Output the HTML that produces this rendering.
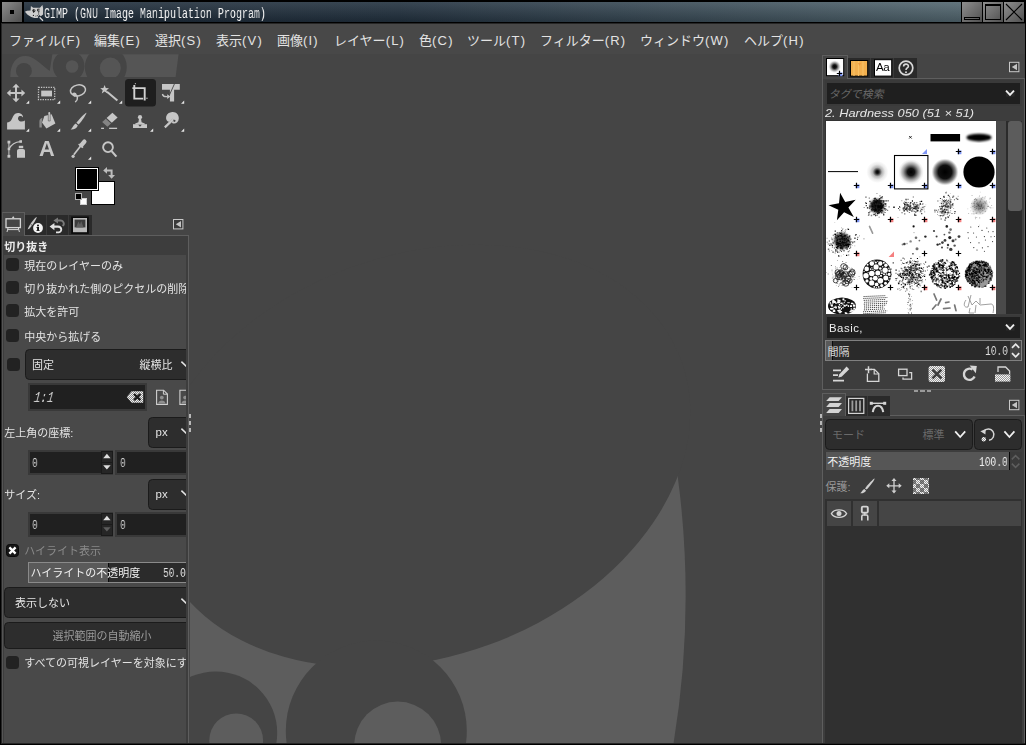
<!DOCTYPE html><html lang="ja"><head><meta charset="utf-8"><title>GIMP (GNU Image Manipulation Program)</title><style>
html,body{margin:0;padding:0;background:#000;}
#r{position:relative;width:1026px;height:745px;overflow:hidden;background:#000;font-family:"Liberation Sans",sans-serif;color:#e3e3e3;}
#r div,#r svg,#r span{position:absolute;box-sizing:border-box;}
#r svg{overflow:hidden;}
#r svg text{font-family:"Liberation Sans","Noto Sans CJK JP",sans-serif;}
.m,.s{will-change:transform;}
.m{font-family:"Liberation Mono",monospace;white-space:pre;}
.s{font-family:"Liberation Sans",sans-serif;white-space:pre;}
</style></head><body><div id="r"><div style="left:2px;top:2px;width:20px;height:20px;background:linear-gradient(135deg,#8c8c8c,#4e4e4e);"><div style="left:8px;top:8px;width:4px;height:4px;background:#000;"></div></div>
<div style="left:24px;top:2px;width:937px;height:20px;background:linear-gradient(180deg,rgba(255,255,255,.10),rgba(0,0,0,.18)),linear-gradient(90deg,#1f2d3a 0%,#22313f 40%,#52666f 100%);"></div>
<span class="m" style="left:44.2px;top:5px;font-size:15.2px;line-height:18px;color:#f2f2f2;transform-origin:0 0;transform:scaleX(.658)">GIMP (GNU Image Manipulation Program)</span>
<div style="left:962px;top:2px;width:20px;height:20px;background:linear-gradient(135deg,#8e8e8e,#505050);"></div>
<div style="left:983px;top:2px;width:20px;height:20px;background:linear-gradient(135deg,#8e8e8e,#505050);"></div>
<div style="left:1004px;top:2px;width:20px;height:20px;background:linear-gradient(135deg,#8e8e8e,#505050);"></div>
<svg style="left:960px;top:0px" width="66" height="24" viewBox="960 0 66 24"><rect x="964.5" y="17.5" width="15" height="2" fill="none" stroke="#000" stroke-width="1"/><rect x="985.5" y="5" width="15" height="14.5" fill="none" stroke="#000" stroke-width="1"/><rect x="985" y="4" width="16" height="2" fill="#000"/><path d="M1006 4L1022 20M1022 4L1006 20" stroke="#000" stroke-width="1.1" fill="none"/></svg>
<svg style="left:24px;top:2px" width="22" height="20" viewBox="24 2 22 20"><path d="M24.9 11.8L27 10.7L30.6 10.6L30.9 6L33.2 7.7L40 7.7L42.4 5L43.1 8L43.1 14.6L40.4 16.6L38.2 17.9L34.3 18.1L31.2 17L27.6 14.7Z" fill="#cdcdcd"/><path d="M38.6 16L43.2 20.9" stroke="#1a2430" stroke-width="2.6"/><path d="M39.6 17.2L43 20.7" stroke="#d8d8d8" stroke-width="1.3"/><circle cx="33.9" cy="10.4" r="1.5" fill="#1c1c1c"/><circle cx="34.3" cy="10" r="0.55" fill="#ddd"/><path d="M33.6 11.6L33.6 12.8" stroke="#1c1c1c" stroke-width="1.1"/><path d="M39.6 9.2L37.6 9.2L37.6 11L39.6 11" stroke="#1c1c1c" stroke-width="0.9" fill="none"/><path d="M38.7 11.4L38.7 14.4L37.6 15.6L35.4 16.2" stroke="#1c1c1c" stroke-width="0.8" fill="none" stroke-dasharray="1.4 0.6"/><circle cx="33.4" cy="15.4" r="0.6" fill="#1c1c1c"/></svg>
<div style="left:1px;top:23px;width:1024px;height:721px;background:#262626;"></div>
<div style="left:2px;top:24px;width:1023px;height:719px;background:#454545;"></div>
<div style="left:2px;top:24px;width:1023px;height:30px;background:#484848;"></div>
<svg style="left:2px;top:24px" width="1023" height="30" viewBox="2 24 1023 30"><text x="9" y="45" font-size="13" fill="#e3e3e3">ファイル<tspan letter-spacing="1.2">(F)</tspan></text><text x="94" y="45" font-size="13" fill="#e3e3e3">編集<tspan letter-spacing="1.2">(E)</tspan></text><text x="155" y="45" font-size="13" fill="#e3e3e3">選択<tspan letter-spacing="1.2">(S)</tspan></text><text x="216" y="45" font-size="13" fill="#e3e3e3">表示<tspan letter-spacing="1.2">(V)</tspan></text><text x="277" y="45" font-size="13" fill="#e3e3e3">画像<tspan letter-spacing="1.2">(I)</tspan></text><text x="334" y="45" font-size="13" fill="#e3e3e3">レイヤー<tspan letter-spacing="1.2">(L)</tspan></text><text x="419" y="45" font-size="13" fill="#e3e3e3">色<tspan letter-spacing="1.2">(C)</tspan></text><text x="467" y="45" font-size="13" fill="#e3e3e3">ツール<tspan letter-spacing="1.2">(T)</tspan></text><text x="540" y="45" font-size="13" fill="#e3e3e3">フィルター<tspan letter-spacing="1.2">(R)</tspan></text><text x="640" y="45" font-size="13" fill="#e3e3e3">ウィンドウ<tspan letter-spacing="1.2">(W)</tspan></text><text x="744" y="45" font-size="13" fill="#e3e3e3">ヘルプ<tspan letter-spacing="1.2">(H)</tspan></text></svg>
<svg style="left:190px;top:54px" width="632" height="689" viewBox="190 54 632 689"><path d="M180 475.4L677.6 475.4A909 909 0 0 1 673.1 746L180 746Z" fill="#5d5d5d"/><ellipse cx="420.06" cy="456.05" rx="278.15" ry="200.9" transform="rotate(-20 420.06 456.05)" fill="#454545"/><circle cx="215.7" cy="732.9" r="61.5" fill="#454545"/><circle cx="236.2" cy="740.3" r="26.9" fill="#5d5d5d"/><circle cx="376.3" cy="731" r="90.5" fill="#454545"/><circle cx="397.7" cy="745" r="43.4" fill="#5d5d5d"/></svg>
<svg style="left:2px;top:54px" width="188" height="180" viewBox="2 54 188 180"><clipPath id="hdr"><rect x="9" y="54.2" width="171" height="22.8"/></clipPath><g clip-path="url(#hdr)"><path d="M10.3 77C10.3 63 16.5 56 25.2 56C33.5 56 40 63.5 49.7 70.9L52.4 54L60 54L60 77Z" fill="#555555"/><path d="M57 54L178.6 54L175.6 77L57 77Z" fill="#555555"/><circle cx="23.9" cy="70.9" r="7.9" fill="#454545"/><circle cx="68.6" cy="66" r="15.8" fill="#454545"/><circle cx="72.1" cy="66.5" r="6.3" fill="#555555"/><circle cx="105.8" cy="67" r="21" fill="#454545"/><circle cx="110.3" cy="68" r="10.5" fill="#555555"/></g><rect x="125" y="79" width="31" height="27.5" rx="3.5" fill="#1e1e1e"/><path d="M29.2 100.6L29.2 103.8L26.0 103.8Z" fill="#e6e6e6"/><path d="M60.2 100.6L60.2 103.8L57.0 103.8Z" fill="#e6e6e6"/><path d="M91.2 100.6L91.2 103.8L88.0 103.8Z" fill="#e6e6e6"/><path d="M122.2 100.6L122.2 103.8L119.0 103.8Z" fill="#e6e6e6"/><path d="M184.2 100.6L184.2 103.8L181.0 103.8Z" fill="#e6e6e6"/><path d="M29.2 128.60000000000002L29.2 131.8L26.0 131.8Z" fill="#e6e6e6"/><path d="M60.2 128.60000000000002L60.2 131.8L57.0 131.8Z" fill="#e6e6e6"/><path d="M91.2 128.60000000000002L91.2 131.8L88.0 131.8Z" fill="#e6e6e6"/><path d="M153.2 128.60000000000002L153.2 131.8L150.0 131.8Z" fill="#e6e6e6"/><path d="M184.2 128.60000000000002L184.2 131.8L181.0 131.8Z" fill="#e6e6e6"/><path d="M91.2 156.60000000000002L91.2 159.8L88.0 159.8Z" fill="#e6e6e6"/><g transform="translate(16 93)" fill="#c6c6c6" stroke="none"><path d="M-1 -6.2L1 -6.2L1 -1L6.2 -1L6.2 1L1 1L1 6.2L-1 6.2L-1 1L-6.2 1L-6.2 -1L-1 -1Z"/><path d="M0 -9.2L3.6 -5.4L-3.6 -5.4ZM0 9.2L3.6 5.4L-3.6 5.4ZM-9.2 0L-5.4 -3.6L-5.4 3.6ZM9.2 0L5.4 -3.6L5.4 3.6Z"/></g><g transform="translate(46.6 93.5)" fill="#c6c6c6" stroke="none"><rect x="-8.1" y="-6.1" width="16.2" height="12.2" fill="none" stroke="#c6c6c6" stroke-width="1.3" stroke-dasharray="1.3 1.15"/><rect x="-5.4" y="-2.9" width="10.8" height="5.8"/></g><g transform="translate(78 90.4)" fill="#c6c6c6" stroke="none"><ellipse cx="0" cy="0" rx="7.6" ry="5.4" transform="rotate(-12)" fill="none" stroke="#c6c6c6" stroke-width="1.5"/><path d="M-5 3.2C-3 2.4 -1.5 3.6 -2.3 5C-3 6 -4.8 5.4 -4.4 4.2C-3.6 3 -0.8 4.5 -0.6 7C-0.4 9 -1 10.3 -2.4 11.2" fill="none" stroke="#c6c6c6" stroke-width="1.5" stroke-linecap="round"/></g><g transform="translate(104.6 89.6)" fill="#c6c6c6" stroke="none"><path d="M0 -4.6L1.2 -1.5L4.4 -1.4L1.9 0.6L2.8 3.8L0 2L-2.8 3.8L-1.9 0.6L-4.4 -1.4L-1.2 -1.5Z"/><path d="M2.4 2.2L12.8 11" stroke="#c6c6c6" stroke-width="2" fill="none"/></g><g transform="translate(140 93)" fill="#c6c6c6" stroke="none"><path d="M-7.6 -4.9L4.7 -4.9L4.7 7.6" fill="none" stroke="#d2d2d2" stroke-width="1.9"/><path d="M-5.7 -8L-5.7 5.6L3.2 5.6" fill="none" stroke="#d2d2d2" stroke-width="1.9"/><rect x="6.4" y="4.6" width="1.1" height="1.4" fill="#bbb"/><rect x="-5.2" y="-9.8" width="1.2" height="1" fill="#bbb"/></g><g transform="translate(171 93)" fill="#c6c6c6" stroke="none"><path d="M-9 -9L8.8 -9L8.8 -3.3L3.1 -3.3L3.1 8.4L-1.1 8.4L-1.1 -3.3L-9 -3.3Z"/><path d="M3.4 -9L-2.2 3.4" stroke="#454545" stroke-width="0.9" fill="none"/><path d="M-8.6 1C-8 3.4 -6 4 -3.4 3.6" fill="none" stroke="#c6c6c6" stroke-width="1.3"/><path d="M-3.8 1.2L-0.6 3.6L-3.8 6Z"/></g><g transform="translate(16 121)" fill="#c6c6c6" stroke="none"><path d="M-8.9 8.4L-8.9 1.4C-5 1.2 -4.3 -2 -3 -4.6C-1.6 -7.6 1.2 -8.6 3.8 -7.8C6.2 -7 7.4 -5 7 -3.6C5.6 -5.2 3 -5.4 2.2 -3.6C1.4 -1.6 3.4 0.6 5.4 0.6C6.8 0.6 8 0.2 8.9 -0.4L8.9 8.4Z"/></g><g transform="translate(47 121)" fill="#c6c6c6" stroke="none"><path d="M-2.6 -5L4.6 -6.8L8.4 2.4L-0.6 7.4L-5 1.6Z"/><rect x="1.3" y="-9" width="1.9" height="9" rx="0.9"/><path d="M-4.6 -3.2C-7 -2.6 -7.6 -1 -7.6 1L-7.6 6.6L-5.2 6.6L-5.2 1.4Z" fill="#8a8a8a"/><path d="M1.3 -6.6L1.3 0L3.2 0L3.2 -6.6" fill="none" stroke="#454545" stroke-width="0.5"/></g><g transform="translate(78 121)" fill="#c6c6c6" stroke="none"><path d="M8.4 -8.2C9 -7.6 3.4 1 0.6 3.6L-1.6 1.8C0.6 -1.4 7.8 -8.6 8.4 -8.2Z"/><path d="M-2.2 2.6L-0.2 4.4C-1 7.4 -4 8.6 -7.4 8.4C-5.4 7.4 -4.8 4 -2.2 2.6Z"/></g><g transform="translate(109 121)" fill="#c6c6c6" stroke="none"><path d="M3.4 -8.2L8.6 -3.4L2.8 1.8L-2.4 -3Z"/><path d="M-3.2 -2.2L2 2.6L-1.6 5.8L-6.8 1Z" fill="#848484"/><rect x="-7.9" y="6.7" width="2.9" height="1.3"/><rect x="0.1" y="6.7" width="8" height="1.3"/></g><g transform="translate(140 121)" fill="#c6c6c6" stroke="none"><circle cx="0" cy="-3.8" r="2.1"/><path d="M-1 -2.4L1 -2.4L1.6 1.2L4.8 2.4L4.8 3.4L-4.8 3.4L-4.8 2.4L-1.6 1.2Z"/><rect x="-7" y="3.2" width="14" height="3.8"/><path d="M-1.8 3.8L1.8 3.8L0 5.8Z" fill="#454545"/></g><g transform="translate(171 121)" fill="#c6c6c6" stroke="none"><path d="M1.2 -9C5 -9.4 8 -6.4 7.8 -2.6C7.6 1 4.8 3 2.2 2.4C1 2.2 0.6 1.4 1.4 0.4L2.8 -1L1.6 -2.2L-1.8 1C-4.4 0.2 -5.4 -2.2 -4.8 -4.6C-4.2 -7.2 -1.6 -8.8 1.2 -9Z"/><path d="M-6.2 6.4L2.2 -1.6" stroke="#c6c6c6" stroke-width="2.2" fill="none"/><circle cx="3.4" cy="-0.2" r="1.1" fill="#454545"/></g><g transform="translate(16 149)" fill="#c6c6c6" stroke="none"><path d="M-7.1 -7L-7.1 7.5" stroke="#c6c6c6" stroke-width="1" fill="none"/><path d="M-7.1 0C-5 -4 -2 -7 4.4 -7.4" stroke="#c6c6c6" stroke-width="1.1" fill="none"/><rect x="-8.5" y="-8.3" width="2.8" height="2.8"/><rect x="-8.3" y="-1.3" width="2.5" height="2.5"/><rect x="-8.5" y="5.9" width="2.8" height="2.8"/><rect x="3.4" y="-8.8" width="2.6" height="2.6"/><path d="M1 2C1 0.8 1.8 0 3 0L7 0C8.2 0 9 0.8 9 2L9 8.7L1 8.7Z"/><rect x="2.8" y="-3.2" width="4.4" height="2.4"/></g><g transform="translate(78 149)" fill="#c6c6c6" stroke="none"><path d="M3.4 -3.8L6.4 -7.4" stroke="#c6c6c6" stroke-width="4.3" stroke-linecap="round" fill="none"/><path d="M0.6 -5L5 -1.4" stroke="#c6c6c6" stroke-width="1.5" fill="none"/><path d="M2.6 -3L-4.2 5.8" stroke="#c6c6c6" stroke-width="1.7" fill="none"/><circle cx="-4.9" cy="7.3" r="1.6"/></g><g transform="translate(108 147.2)" fill="#c6c6c6" stroke="none"><circle cx="0" cy="0" r="4.9" fill="none" stroke="#c6c6c6" stroke-width="1.9"/><path d="M3.6 3.9L8.4 9.4" stroke="#c6c6c6" stroke-width="2.2" fill="none"/></g></svg>
<span class="s" style="left:39.3px;top:137.4px;font-size:21.8px;line-height:24px;font-weight:bold;color:#c6c6c6">A</span>
<div style="left:91px;top:181px;width:24px;height:24px;background:#fff;border:1px solid #000;"></div>
<div style="left:75px;top:167px;width:24px;height:24px;background:#000;border:1px solid #000;box-shadow:inset 0 0 0 1px #fff;"></div>
<div style="left:80px;top:198px;width:7px;height:7px;background:#fff;border:1px solid #d0d0d0;"></div>
<div style="left:75px;top:193px;width:7px;height:7px;background:#000;border:1px solid #b0b0b0;"></div>
<svg style="left:100px;top:165px" width="18" height="16" viewBox="100 165 18 16"><path d="M103.2 170.4L107 167L107 169.4L112.6 169.4L112.6 175L115 175L111.6 178.8L108.2 175L110.6 175L110.6 171.4L107 171.4L107 173.8Z" fill="#bdbdbd"/></svg>
<div style="left:2px;top:235px;width:187px;height:508px;background:#3d3d3d;border-top:1px solid #5e5e5e;border-right:1px solid #5e5e5e;border-left:1px solid #555;"></div>
<div style="left:25px;top:215px;width:67px;height:20px;background:#2a2a2a;"></div>
<div style="left:46px;top:215px;width:1px;height:20px;background:#3a3a3a;"></div>
<div style="left:68px;top:215px;width:1px;height:20px;background:#3a3a3a;"></div>
<div style="left:2px;top:212px;width:23px;height:24px;background:#454545;border-top:1px solid #5e5e5e;border-right:1px solid #5e5e5e;border-left:1px solid #555;"></div>
<div style="left:4px;top:255px;width:182px;height:488px;background:#494949;"></div>
<svg style="left:2px;top:210px" width="188" height="26" viewBox="2 210 188 26"><rect x="6" y="218.8" width="14.4" height="8.8" fill="none" stroke="#d4d4d4" stroke-width="1.3"/><path d="M11.8 218.2L13.2 216L14.6 218.2Z" fill="#d4d4d4"/><path d="M7.6 229.6L18.8 229.6M8 228L7 232M18.4 228L19.4 232" stroke="#d4d4d4" stroke-width="1" fill="none"/><path d="M36.6 217C37.2 217.4 33.5 224.6 29.6 228.4L27.6 229.6L28.4 227.4C31 222.6 36 216.6 36.6 217Z" fill="#c8c8c8"/><path d="M30.6 224.2L32.4 225.6" stroke="#2a2a2a" stroke-width="0.7"/><circle cx="38" cy="228" r="4.9" fill="#f4f4f4"/><rect x="37.1" y="227" width="1.9" height="3.6" fill="#111"/><circle cx="38" cy="225.4" r="1" fill="#111"/><rect x="36.5" y="230.2" width="3.1" height="0.8" fill="#111"/><rect x="36.5" y="227" width="1.5" height="0.8" fill="#111"/><path d="M58 217.6L53.4 220.6L58 223.6L58 221.6L60.4 221.6C63 221.6 63.6 224.4 62 225.4L63.6 226.6C66.2 224.4 64.4 219.6 60.4 219.6L58 219.6Z" fill="#7a7a7a"/><path d="M54.4 223L49.6 226.6L54.4 230.2L54.4 227.7L58 227.7C61 227.7 61 231.4 58.6 231.5L56 231.5L56 233.2L58.8 233.2C63.6 233 63.4 225.6 58 225.6L54.4 225.6Z" fill="#e2e2e2"/><rect x="71.2" y="216.5" width="17.6" height="17.4" fill="#0c0c0c"/><rect x="73" y="218" width="14" height="14.2" fill="#b9b9b9"/><rect x="74.6" y="219.6" width="10.8" height="7.8" fill="#3c3c3c"/><path d="M76 227.4L78.4 221.6L80 224.4L81.2 221L83.6 227.4Z" fill="#5e5e5e"/><rect x="173.5" y="219.5" width="9.4" height="9.4" fill="#3a3a3a" stroke="#c9c9c9" stroke-width="1"/><path d="M175.8 224.2L181 221L181 227.4Z" fill="#c4c4c4"/></svg>
<div style="left:3px;top:236px;width:183px;height:507px;overflow:hidden;"><div style="left:3px;top:22px;width:13px;height:13px;background:#222;border-radius:3.5px;"></div><div style="left:3px;top:45px;width:13px;height:13px;background:#222;border-radius:3.5px;"></div><div style="left:3px;top:68px;width:13px;height:13px;background:#222;border-radius:3.5px;"></div><div style="left:3px;top:93px;width:13px;height:13px;background:#222;border-radius:3.5px;"></div><div style="left:4px;top:122px;width:13px;height:13px;background:#222;border-radius:3.5px;"></div><div style="left:22px;top:113px;width:175px;height:31px;background:#2d2d2d;border:1px solid #1b1b1b;border-radius:4.5px;"></div><div style="left:25px;top:147px;width:119px;height:28px;background:#393939;"></div><div style="left:27px;top:149px;width:115px;height:24px;background:#202020;"></div><span class="m" style="left:30.200000000000003px;top:153px;font-size:15.2px;line-height:18px;font-style:italic;color:#dcdcdc;transform-origin:0 100%;transform:scaleX(.72) skewX(-9deg)">1:1</span><div style="left:145px;top:181px;width:52px;height:31px;background:#2d2d2d;border:1px solid #1b1b1b;border-radius:4.5px;"></div><div style="left:25px;top:214px;width:85px;height:25px;background:#393939;"></div><div style="left:27px;top:216px;width:71px;height:21px;background:#202020;"></div><div style="left:98px;top:215px;width:12px;height:23px;background:#262626;border:1px solid #1a1a1a;"></div><div style="left:98px;top:226px;width:12px;height:1px;background:#1a1a1a;"></div><div style="left:112px;top:214px;width:85px;height:25px;background:#393939;"></div><div style="left:114px;top:216px;width:83px;height:21px;background:#202020;"></div><span class="m" style="left:29.200000000000003px;top:221.39999999999998px;font-size:12.6px;line-height:15px;color:#dcdcdc;transform-origin:0 0;transform:scaleX(.75)">0</span><span class="m" style="left:116.6px;top:221.39999999999998px;font-size:12.6px;line-height:15px;color:#dcdcdc;transform-origin:0 0;transform:scaleX(.75)">0</span><div style="left:145px;top:243px;width:52px;height:31px;background:#2d2d2d;border:1px solid #1b1b1b;border-radius:4.5px;"></div><div style="left:25px;top:276px;width:85px;height:25px;background:#393939;"></div><div style="left:27px;top:278px;width:71px;height:21px;background:#202020;"></div><div style="left:98px;top:277px;width:12px;height:23px;background:#262626;border:1px solid #1a1a1a;"></div><div style="left:98px;top:288px;width:12px;height:1px;background:#1a1a1a;"></div><div style="left:112px;top:276px;width:85px;height:25px;background:#393939;"></div><div style="left:114px;top:278px;width:83px;height:21px;background:#202020;"></div><span class="m" style="left:29.200000000000003px;top:283.4px;font-size:12.6px;line-height:15px;color:#dcdcdc;transform-origin:0 0;transform:scaleX(.75)">0</span><span class="m" style="left:116.6px;top:283.4px;font-size:12.6px;line-height:15px;color:#dcdcdc;transform-origin:0 0;transform:scaleX(.75)">0</span><div style="left:3px;top:308px;width:13px;height:13px;background:#161616;border-radius:3.5px;border:1px solid #0a0a0a;"></div><div style="left:25px;top:326px;width:175px;height:21px;background:#2b2b2b;border:1px solid #8a8a8a;"></div><div style="left:26px;top:327px;width:79px;height:19px;background:#5a5a5a;"></div><div style="left:105px;top:327px;width:1px;height:19px;background:#0a0a0a;"></div><span class="m" style="left:160.2px;top:331px;font-size:12.6px;line-height:15px;color:#e6e6e6;transform-origin:0 0;transform:scaleX(.75)">50.0</span><div style="left:1px;top:351px;width:200px;height:31px;background:#2d2d2d;border:1px solid #1b1b1b;border-radius:4.5px;"></div><div style="left:1px;top:386px;width:200px;height:27px;background:#2d2d2d;border:1px solid #1b1b1b;border-radius:4.5px;"></div><div style="left:3px;top:420px;width:13px;height:13px;background:#222;border-radius:3.5px;"></div></div>
<svg style="left:3px;top:236px" width="183" height="507" viewBox="3 236 183 507"><text x="4.3" y="251.2" font-size="11" font-weight="bold" fill="#ececec">切り抜き</text><text x="24.3" y="269.5" font-size="11" fill="#e3e3e3">現在のレイヤーのみ</text><text x="24.3" y="292.5" font-size="11" fill="#e3e3e3">切り抜かれた側のピクセルの削除</text><text x="24.3" y="315.5" font-size="11" fill="#e3e3e3">拡大を許可</text><text x="24.3" y="340.5" font-size="11" fill="#e3e3e3">中央から拡げる</text><text x="32" y="369.2" font-size="11" fill="#e3e3e3">固定</text><text x="139.6" y="369.2" font-size="11" fill="#e3e3e3">縦横比</text><path d="M181.4 361.6L186.4 366.4" stroke="#e3e3e3" stroke-width="1.6" fill="none"/><defs><pattern id="ck" width="2" height="2" patternUnits="userSpaceOnUse"><rect width="2" height="2" fill="#8c8c8c"/><rect width="1" height="1" fill="#f2f2f2"/><rect x="1" y="1" width="1" height="1" fill="#f2f2f2"/></pattern></defs><path d="M126.8 397L131.6 391.2L143.2 391.2L143.2 402.8L131.6 402.8Z" fill="url(#ck)"/><path d="M134 394L140.4 400.2M140.4 394L134 400.2" stroke="#1c1c1c" stroke-width="2.4" fill="none"/><path d="M156.6 390.2L163.6 390.2L167.4 394L167.4 404.4L156.6 404.4Z" fill="none" stroke="#cfcfcf" stroke-width="1.1"/><path d="M163.4 390.4L163.4 394.2L167.2 394.2" fill="none" stroke="#cfcfcf" stroke-width="1"/><circle cx="161.8" cy="397.6" r="1.9" fill="#8f8f8f"/><path d="M158.2 403.6C158.2 399.6 165.4 399.6 165.4 403.6Z" fill="#8f8f8f"/><path d="M179.9 390.2L186.9 390.2L190.70000000000002 394L190.70000000000002 404.4L179.9 404.4Z" fill="none" stroke="#cfcfcf" stroke-width="1.1"/><path d="M186.70000000000002 390.4L186.70000000000002 394.2L190.5 394.2" fill="none" stroke="#cfcfcf" stroke-width="1"/><circle cx="185.10000000000002" cy="397.6" r="1.9" fill="#8f8f8f"/><path d="M181.5 403.6C181.5 399.6 188.70000000000002 399.6 188.70000000000002 403.6Z" fill="#8f8f8f"/><text x="4.3" y="436.8" font-size="11" fill="#e3e3e3">左上角の座標:</text><path d="M103.2 458.2L106.9 453.8L110.6 458.2Z" fill="#dedede"/><path d="M103.2 465.2L106.9 469.6L110.6 465.2Z" fill="#dedede"/><text x="4.3" y="498.6" font-size="11" fill="#e3e3e3">サイズ:</text><path d="M103.2 520.2L106.9 515.8L110.6 520.2Z" fill="#dedede"/><path d="M103.2 527.2L106.9 531.6L110.6 527.2Z" fill="#5c5c5c"/><text x="155.56" y="436" font-size="11.44" fill="#e3e3e3">px</text><path d="M181.4 428.6L186.4 433.4" stroke="#e3e3e3" stroke-width="1.6" fill="none"/><text x="155.56" y="498" font-size="11.44" fill="#e3e3e3">px</text><path d="M181.4 490.6L186.4 495.4" stroke="#e3e3e3" stroke-width="1.6" fill="none"/><path d="M9.4 547.4L15.6 553.6M15.6 547.4L9.4 553.6" stroke="#fff" stroke-width="2.3" fill="none"/><text x="24.3" y="555.3" font-size="11" fill="#8a8a8a">ハイライト表示</text><text x="30.6" y="577" font-size="11" fill="#f0f0f0">ハイライトの不透明度</text><text x="15" y="607.4" font-size="11" fill="#e3e3e3">表示しない</text><path d="M181.4 598.6L186.4 603.4" stroke="#e3e3e3" stroke-width="1.6" fill="none"/><text x="52.6" y="640.4" font-size="11" fill="#9a9a9a">選択範囲の自動縮小</text><text x="24.3" y="667.4" font-size="11" fill="#e3e3e3">すべての可視レイヤーを対象にする</text></svg>
<div style="left:189px;top:414.2px;width:2px;height:3.4px;background:#b8b8b8;"></div>
<div style="left:189px;top:421.3px;width:2px;height:3.4px;background:#b8b8b8;"></div>
<div style="left:189px;top:428.3px;width:2px;height:3.4px;background:#b8b8b8;"></div>
<div style="left:822px;top:78px;width:203px;height:312px;background:#3d3d3d;border:1px solid #5e5e5e;"></div>
<div style="left:848px;top:58px;width:69px;height:20px;background:#2a2a2a;"></div>
<div style="left:870px;top:58px;width:1px;height:20px;background:#3a3a3a;"></div>
<div style="left:893px;top:58px;width:1px;height:20px;background:#3a3a3a;"></div>
<div style="left:822px;top:55px;width:26px;height:24px;background:#454545;border-top:1px solid #5e5e5e;border-right:1px solid #5e5e5e;border-left:1px solid #5e5e5e;"></div>
<div style="left:825px;top:80px;width:197px;height:26px;background:#3a3a3a;"></div>
<div style="left:827px;top:83px;width:193px;height:21px;background:#1f1f1f;"></div>
<div style="left:825px;top:120px;width:171px;height:194px;background:#fff;border-left:1px solid #333;border-top:1px solid #333;"></div>
<div style="left:996px;top:121px;width:10px;height:193px;background:#4a4a4a;"></div>
<div style="left:1006px;top:121px;width:16px;height:193px;background:#2b2b2b;"></div>
<div style="left:1008px;top:121px;width:13.5px;height:90px;background:#5c5c5c;border-radius:3px;"></div>
<div style="left:825px;top:315px;width:197px;height:25px;background:#3a3a3a;"></div>
<div style="left:827px;top:317px;width:193px;height:21px;background:#1f1f1f;"></div>
<div style="left:825px;top:340px;width:197px;height:21px;background:#2a2a2a;border:1px solid #808080;"></div>
<div style="left:826px;top:341px;width:6px;height:19px;background:#5a5a5a;"></div>
<div style="left:832px;top:341px;width:1px;height:19px;background:#080808;"></div>
<div style="left:1010px;top:341px;width:11px;height:19px;background:#444;"></div>
<svg style="left:822px;top:54px" width="203" height="336" viewBox="822 54 203 336"><defs><radialGradient id="rg50"><stop offset="0" stop-color="#000"/><stop offset="0.28" stop-color="#141414"/><stop offset="0.6" stop-color="#9a9a9a"/><stop offset="0.85" stop-color="#ececec"/><stop offset="1" stop-color="#fff"/></radialGradient><radialGradient id="rg25"><stop offset="0" stop-color="#000"/><stop offset="0.14" stop-color="#1a1a1a"/><stop offset="0.42" stop-color="#b4b4b4"/><stop offset="0.7" stop-color="#eaeaea"/><stop offset="1" stop-color="#fff"/></radialGradient><radialGradient id="rg75"><stop offset="0" stop-color="#000"/><stop offset="0.5" stop-color="#101010"/><stop offset="0.78" stop-color="#8a8a8a"/><stop offset="0.93" stop-color="#e6e6e6"/><stop offset="1" stop-color="#fff"/></radialGradient><radialGradient id="rgs"><stop offset="0" stop-color="#555"/><stop offset="0.4" stop-color="#8a8a8a"/><stop offset="1" stop-color="#fff"/></radialGradient><filter id="bl1"><feGaussianBlur stdDeviation="1.1"/></filter><filter id="bl05"><feGaussianBlur stdDeviation="0.45"/></filter><filter id="bl03"><feGaussianBlur stdDeviation="0.32"/></filter></defs><rect x="826.5" y="58.5" width="17.2" height="17.2" fill="#fff" stroke="#000"/><circle cx="834.6" cy="66.6" r="6.4" fill="url(#rg50)"/><rect x="838.6" y="72.4" width="3.8" height="3.8" fill="#7f96f5"/><path d="M836.8 72.9h5.4v1.2h-5.4zM838.9 70.8h1.2v5.4h-1.2z" fill="#000"/><rect x="850.5" y="60.5" width="17.2" height="15.6" fill="#f3b04e" stroke="#000"/><path d="M854 61L854 76M858.5 61L858.5 76M863 61L863 76" stroke="#f9c064" stroke-width="1.2"/><path d="M858 63L861 63L859.5 66Z" fill="#f09a40"/><rect x="874.5" y="59.7" width="17.2" height="16.4" fill="#fff" stroke="#000"/><circle cx="906" cy="68" r="6.8" fill="none" stroke="#d8d8d8" stroke-width="1.7"/><path d="M903.6 66.4C903.6 63.4 908.4 63.4 908.4 66.2C908.4 68 906 68 906 70" fill="none" stroke="#d8d8d8" stroke-width="1.6"/><circle cx="906" cy="72.2" r="1" fill="#d8d8d8"/><rect x="1009.5" y="62.3" width="9.4" height="9.4" fill="#3a3a3a" stroke="#c9c9c9" stroke-width="1"/><path d="M1011.8 67L1017 63.8L1017 70.2Z" fill="#c4c4c4"/><rect x="1006" y="90" width="8.6" height="6.6" fill="#2a2a2a"/><path d="M1006 90.6L1010.0 94.89999999999999L1014.0 90.6" fill="none" stroke="#f0f0f0" stroke-width="1.8"/><rect x="1006" y="324" width="8.6" height="6.6" fill="#2a2a2a"/><path d="M1006 324.6L1010.0 328.90000000000003L1014.0 324.6" fill="none" stroke="#f0f0f0" stroke-width="1.8"/><text x="0" y="0" transform="translate(828.8 98) skewX(-12)" font-size="11" fill="#676767">タグで検索</text><text x="827.4" y="355.6" font-size="11" fill="#dcdcdc">間隔</text><path d="M1012 347.8L1015.6 344.2L1019.2 347.8" fill="none" stroke="#e8e8e8" stroke-width="1.8"/><path d="M1012 353.2L1015.6 356.8L1019.2 353.2" fill="none" stroke="#e8e8e8" stroke-width="1.8"/><clipPath id="gclip"><rect x="826" y="121" width="170" height="193"/></clipPath><g clip-path="url(#gclip)"><path d="M909.1999999999999 136.10000000000002L911.6 138.5M911.6 136.10000000000002L909.1999999999999 138.5" stroke="#222" stroke-width="1"/><path d="M927 149L927 154L922 154Z" fill="#7f96f5"/><rect x="930.5" y="134" width="29.6" height="7.4" fill="#000" filter="url(#bl05)"/><ellipse cx="979" cy="137.6" rx="12.6" ry="3.9" fill="#000" filter="url(#bl1)"/><rect x="957.6" y="150.4" width="3.8" height="3.8" fill="#7f96f5"/><path d="M955.8 150.9h5.4v1.2h-5.4zM957.9 148.8h1.2v5.4h-1.2z" fill="#000"/><rect x="991.6" y="150.4" width="3.8" height="3.8" fill="#7f96f5"/><path d="M989.8 150.9h5.4v1.2h-5.4zM991.9 148.8h1.2v5.4h-1.2z" fill="#000"/><rect x="828" y="171.1" width="30" height="1" fill="#000"/><circle cx="877.4" cy="172" r="11" fill="url(#rg25)"/><circle cx="911" cy="172" r="12.8" fill="url(#rg50)"/><circle cx="945" cy="172" r="13.6" fill="url(#rg75)"/><circle cx="979" cy="172" r="15.6" fill="#000"/><rect x="855.6" y="184.4" width="3.8" height="3.8" fill="#7f96f5"/><path d="M853.8 184.9h5.4v1.2h-5.4zM855.9 182.8h1.2v5.4h-1.2z" fill="#000"/><rect x="889.6" y="184.4" width="3.8" height="3.8" fill="#7f96f5"/><path d="M887.8 184.9h5.4v1.2h-5.4zM889.9 182.8h1.2v5.4h-1.2z" fill="#000"/><rect x="923.6" y="184.4" width="3.8" height="3.8" fill="#7f96f5"/><path d="M921.8 184.9h5.4v1.2h-5.4zM923.9 182.8h1.2v5.4h-1.2z" fill="#000"/><rect x="957.6" y="184.4" width="3.8" height="3.8" fill="#7f96f5"/><path d="M955.8 184.9h5.4v1.2h-5.4zM957.9 182.8h1.2v5.4h-1.2z" fill="#000"/><rect x="991.6" y="184.4" width="3.8" height="3.8" fill="#7f96f5"/><path d="M989.8 184.9h5.4v1.2h-5.4zM991.9 182.8h1.2v5.4h-1.2z" fill="#000"/><rect x="894.5" y="155.5" width="33.4" height="33.4" fill="none" stroke="#000" stroke-width="1.1"/><path d="M840.1 192.7L845.2 202.1L855.7 199.8L848.4 207.6L853.8 216.9L844.1 212.3L836.9 220.3L838.3 209.7L828.5 205.3L839.0 203.3Z" fill="#000"/><circle cx="877" cy="206" r="7" fill="#222" filter="url(#bl1)"/><g filter="url(#bl03)"><path d="M882.9 212.4h1.3v1.3h-1.3zM877.9 206.6h1.4v1.4h-1.4zM882.7 206.9h1.5v1.5h-1.5zM878.0 210.5h0.7v0.7h-0.7zM872.0 208.0h0.9v0.9h-0.9zM880.1 201.2h1.2v1.2h-1.2zM886.1 205.6h0.8v0.8h-0.8zM875.7 199.2h1.4v1.4h-1.4zM880.3 206.7h1.3v1.3h-1.3zM877.7 200.6h1.4v1.4h-1.4zM879.0 201.0h1.1v1.1h-1.1zM885.7 209.1h1.2v1.2h-1.2zM871.7 205.8h1.0v1.0h-1.0zM870.8 204.5h1.2v1.2h-1.2zM876.7 214.4h1.2v1.2h-1.2zM877.8 206.1h1.3v1.3h-1.3zM882.0 209.9h1.0v1.0h-1.0zM880.0 210.5h0.8v0.8h-0.8zM881.5 206.6h1.0v1.0h-1.0zM884.7 212.0h1.1v1.1h-1.1zM875.4 201.0h1.0v1.0h-1.0zM878.9 212.3h1.0v1.0h-1.0zM879.4 207.4h1.4v1.4h-1.4zM877.4 200.1h1.4v1.4h-1.4zM877.9 201.8h1.2v1.2h-1.2zM877.3 205.4h1.2v1.2h-1.2zM884.2 212.1h0.7v0.7h-0.7zM881.8 205.7h0.8v0.8h-0.8zM868.2 214.1h1.4v1.4h-1.4zM877.6 206.2h1.5v1.5h-1.5zM872.9 203.3h1.0v1.0h-1.0zM887.4 200.0h1.5v1.5h-1.5zM875.8 209.1h0.8v0.8h-0.8zM881.3 204.4h0.9v0.9h-0.9zM873.4 213.8h1.4v1.4h-1.4zM877.0 206.9h0.9v0.9h-0.9zM880.1 210.3h1.3v1.3h-1.3zM880.4 204.2h1.4v1.4h-1.4zM875.9 203.4h1.0v1.0h-1.0zM875.5 199.6h0.9v0.9h-0.9zM880.0 202.1h1.0v1.0h-1.0zM876.9 207.0h1.2v1.2h-1.2zM875.5 205.3h1.0v1.0h-1.0zM879.5 208.4h1.4v1.4h-1.4zM871.7 205.1h1.2v1.2h-1.2zM881.2 212.3h1.4v1.4h-1.4zM882.8 204.6h0.8v0.8h-0.8zM878.2 211.6h1.3v1.3h-1.3zM881.4 205.2h1.3v1.3h-1.3zM879.2 205.4h1.2v1.2h-1.2zM872.6 201.7h1.4v1.4h-1.4zM877.7 200.3h1.0v1.0h-1.0zM880.5 209.9h1.2v1.2h-1.2zM872.3 207.7h0.9v0.9h-0.9zM874.8 208.1h0.7v0.7h-0.7zM882.1 205.6h1.4v1.4h-1.4zM876.5 193.0h0.9v0.9h-0.9zM879.5 200.5h1.0v1.0h-1.0zM874.6 197.4h1.1v1.1h-1.1zM879.6 201.6h1.1v1.1h-1.1zM869.4 205.5h1.0v1.0h-1.0zM877.8 208.9h1.4v1.4h-1.4zM884.7 209.8h1.1v1.1h-1.1zM877.7 203.2h1.2v1.2h-1.2zM874.2 203.9h1.1v1.1h-1.1zM877.4 213.0h1.3v1.3h-1.3zM880.6 208.7h1.1v1.1h-1.1zM882.2 210.6h0.8v0.8h-0.8zM872.5 206.1h0.8v0.8h-0.8zM879.2 201.6h1.2v1.2h-1.2zM869.3 211.3h1.3v1.3h-1.3zM882.4 197.9h0.7v0.7h-0.7zM877.7 204.9h0.9v0.9h-0.9zM873.6 198.2h1.2v1.2h-1.2zM868.7 197.5h1.2v1.2h-1.2zM887.0 209.8h1.2v1.2h-1.2zM872.3 202.5h1.1v1.1h-1.1zM877.8 205.3h1.1v1.1h-1.1zM877.6 204.2h0.7v0.7h-0.7zM880.2 197.9h0.9v0.9h-0.9zM877.2 211.6h1.0v1.0h-1.0zM879.4 195.2h1.2v1.2h-1.2zM878.9 202.8h0.8v0.8h-0.8zM885.1 208.2h1.2v1.2h-1.2zM878.5 199.3h1.3v1.3h-1.3zM882.6 205.3h0.8v0.8h-0.8zM874.7 200.8h1.4v1.4h-1.4zM870.7 209.8h0.7v0.7h-0.7zM873.5 205.0h0.8v0.8h-0.8zM873.2 202.0h0.8v0.8h-0.8zM877.7 200.8h1.1v1.1h-1.1zM880.0 202.1h0.9v0.9h-0.9zM876.8 205.6h0.8v0.8h-0.8zM884.5 205.8h1.2v1.2h-1.2zM885.4 200.0h1.4v1.4h-1.4zM872.9 206.5h1.1v1.1h-1.1zM874.1 209.6h0.7v0.7h-0.7zM876.4 214.7h1.2v1.2h-1.2zM879.0 207.3h1.5v1.5h-1.5zM871.1 210.2h1.4v1.4h-1.4zM870.7 214.7h1.5v1.5h-1.5zM872.5 204.5h1.2v1.2h-1.2z" fill="#000" opacity="0.5"/><path d="M872.0 206.1h1.2v1.2h-1.2zM877.0 205.7h1.1v1.1h-1.1zM880.3 200.3h0.9v0.9h-0.9zM883.6 200.3h1.1v1.1h-1.1zM879.7 210.9h1.3v1.3h-1.3zM873.5 209.4h1.1v1.1h-1.1zM883.9 207.9h1.5v1.5h-1.5zM865.7 205.1h1.2v1.2h-1.2zM878.8 198.0h1.4v1.4h-1.4zM880.3 206.6h0.8v0.8h-0.8zM882.3 200.0h1.3v1.3h-1.3zM875.8 201.3h1.0v1.0h-1.0zM881.4 211.6h0.8v0.8h-0.8zM878.6 200.9h0.9v0.9h-0.9zM872.2 209.5h1.0v1.0h-1.0zM882.4 210.0h0.9v0.9h-0.9zM878.2 209.7h1.5v1.5h-1.5zM875.3 208.6h1.2v1.2h-1.2zM880.8 204.3h1.4v1.4h-1.4zM863.7 207.2h0.9v0.9h-0.9zM874.9 209.1h1.4v1.4h-1.4zM886.2 203.4h0.8v0.8h-0.8zM878.0 206.8h0.8v0.8h-0.8zM879.0 198.0h1.0v1.0h-1.0zM880.2 207.7h1.4v1.4h-1.4zM881.5 203.8h0.9v0.9h-0.9zM876.9 211.0h0.8v0.8h-0.8zM878.4 212.0h1.5v1.5h-1.5zM874.4 200.0h0.9v0.9h-0.9zM882.0 205.5h1.2v1.2h-1.2zM874.1 210.8h1.2v1.2h-1.2zM875.3 205.5h0.8v0.8h-0.8zM874.9 213.5h1.1v1.1h-1.1zM878.8 202.5h0.8v0.8h-0.8zM880.3 197.0h1.4v1.4h-1.4zM885.1 204.2h1.1v1.1h-1.1zM874.1 199.4h0.9v0.9h-0.9zM873.7 206.4h1.0v1.0h-1.0zM885.6 200.6h0.9v0.9h-0.9zM873.8 198.0h1.0v1.0h-1.0zM874.0 199.6h1.0v1.0h-1.0zM879.4 205.4h1.3v1.3h-1.3zM879.8 208.5h0.9v0.9h-0.9zM875.8 211.4h0.9v0.9h-0.9zM877.0 212.7h1.3v1.3h-1.3zM882.7 205.1h1.1v1.1h-1.1zM883.5 211.0h0.8v0.8h-0.8zM878.4 199.5h1.1v1.1h-1.1zM869.2 200.7h1.4v1.4h-1.4zM873.3 209.0h1.0v1.0h-1.0zM870.5 202.4h1.4v1.4h-1.4zM869.4 206.3h1.2v1.2h-1.2zM873.8 202.7h1.2v1.2h-1.2zM884.4 203.0h1.4v1.4h-1.4zM875.3 201.8h1.3v1.3h-1.3zM869.5 205.5h0.8v0.8h-0.8zM875.1 198.1h0.9v0.9h-0.9zM877.7 211.6h0.8v0.8h-0.8zM874.1 203.3h1.0v1.0h-1.0zM881.9 205.2h1.4v1.4h-1.4zM881.7 211.3h1.0v1.0h-1.0zM877.3 207.1h1.3v1.3h-1.3zM883.2 204.6h1.0v1.0h-1.0zM878.4 206.0h1.3v1.3h-1.3zM877.7 205.6h0.8v0.8h-0.8zM881.2 207.5h0.8v0.8h-0.8zM877.9 206.6h1.2v1.2h-1.2zM871.0 209.0h1.3v1.3h-1.3zM883.0 214.0h1.4v1.4h-1.4zM878.9 206.6h1.4v1.4h-1.4zM867.9 215.3h0.7v0.7h-0.7zM874.7 206.8h1.0v1.0h-1.0zM876.6 202.2h0.8v0.8h-0.8zM874.1 202.1h1.5v1.5h-1.5zM874.9 205.7h1.0v1.0h-1.0zM875.7 209.9h1.0v1.0h-1.0zM881.2 196.8h1.4v1.4h-1.4zM883.2 203.8h1.0v1.0h-1.0zM880.9 200.9h0.8v0.8h-0.8zM881.4 206.6h1.4v1.4h-1.4zM875.0 215.1h1.2v1.2h-1.2zM880.8 203.1h1.2v1.2h-1.2zM884.7 203.3h1.3v1.3h-1.3zM880.5 206.0h0.9v0.9h-0.9zM882.8 201.3h1.5v1.5h-1.5zM871.8 203.6h1.1v1.1h-1.1zM881.8 196.1h1.0v1.0h-1.0zM875.6 209.5h1.1v1.1h-1.1zM865.0 202.3h0.8v0.8h-0.8zM868.2 212.0h1.4v1.4h-1.4zM869.0 207.7h1.0v1.0h-1.0zM880.6 206.0h1.1v1.1h-1.1zM875.2 201.6h1.3v1.3h-1.3zM875.8 201.0h1.5v1.5h-1.5zM865.4 196.6h1.1v1.1h-1.1zM876.6 209.5h1.1v1.1h-1.1z" fill="#000" opacity="0.75"/><path d="M878.5 216.5h1.4v1.4h-1.4zM878.0 210.8h0.9v0.9h-0.9zM872.4 205.4h1.1v1.1h-1.1zM876.3 211.5h1.5v1.5h-1.5zM870.3 201.0h0.7v0.7h-0.7zM876.8 201.4h0.9v0.9h-0.9zM872.8 213.9h1.4v1.4h-1.4zM871.9 209.5h0.9v0.9h-0.9zM880.0 206.1h1.1v1.1h-1.1zM872.7 205.9h1.1v1.1h-1.1zM872.9 202.3h1.0v1.0h-1.0zM883.1 200.7h1.2v1.2h-1.2z" fill="#000" opacity="0.25"/><path d="M874.8 207.7h1.1v1.1h-1.1zM874.5 201.0h0.9v0.9h-0.9zM880.6 207.3h1.5v1.5h-1.5zM873.8 214.2h0.9v0.9h-0.9zM877.9 205.2h1.4v1.4h-1.4zM874.4 204.8h1.4v1.4h-1.4zM877.4 213.3h0.8v0.8h-0.8zM879.7 205.1h1.3v1.3h-1.3zM878.0 205.4h1.0v1.0h-1.0zM878.7 206.5h1.1v1.1h-1.1zM876.5 200.1h1.4v1.4h-1.4zM880.8 212.1h0.7v0.7h-0.7zM879.3 200.2h0.9v0.9h-0.9zM873.2 200.2h1.1v1.1h-1.1zM879.1 209.4h0.8v0.8h-0.8zM865.6 202.8h1.3v1.3h-1.3zM876.5 205.3h1.1v1.1h-1.1zM879.8 203.1h0.9v0.9h-0.9zM874.6 197.8h0.7v0.7h-0.7zM877.6 207.4h1.2v1.2h-1.2zM876.1 202.2h1.2v1.2h-1.2zM875.1 209.9h1.2v1.2h-1.2zM874.1 209.6h0.9v0.9h-0.9zM875.6 198.8h0.9v0.9h-0.9zM880.6 200.1h1.1v1.1h-1.1zM871.4 206.0h0.8v0.8h-0.8zM875.1 209.5h0.8v0.8h-0.8zM866.9 207.2h1.4v1.4h-1.4zM880.7 210.0h1.2v1.2h-1.2zM880.5 206.5h1.1v1.1h-1.1z" fill="#000" opacity="1.0"/></g><g filter="url(#bl03)"><path d="M925.5 204.6h0.7v0.7h-0.7zM914.4 205.7h1.3v1.3h-1.3zM914.8 212.0h1.0v1.0h-1.0zM918.9 207.5h0.8v0.8h-0.8zM904.3 209.0h0.7v0.7h-0.7zM904.2 208.7h1.2v1.2h-1.2zM904.4 209.2h0.8v0.8h-0.8zM901.1 199.9h1.3v1.3h-1.3zM918.2 204.7h1.4v1.4h-1.4zM908.5 209.4h1.1v1.1h-1.1zM903.3 207.5h1.4v1.4h-1.4zM907.5 204.0h1.4v1.4h-1.4zM915.7 208.4h1.3v1.3h-1.3zM907.8 206.3h1.1v1.1h-1.1zM909.6 206.4h0.9v0.9h-0.9zM909.7 203.1h1.2v1.2h-1.2zM905.0 208.4h1.4v1.4h-1.4z" fill="#000" opacity="0.25"/><path d="M916.2 202.0h1.2v1.2h-1.2zM904.3 204.0h1.2v1.2h-1.2zM918.4 205.6h1.1v1.1h-1.1zM912.4 207.2h1.1v1.1h-1.1zM911.1 207.8h1.0v1.0h-1.0zM888.5 206.2h1.2v1.2h-1.2zM909.8 202.9h0.9v0.9h-0.9zM909.8 204.9h1.4v1.4h-1.4zM916.9 209.7h1.4v1.4h-1.4zM915.7 207.4h1.4v1.4h-1.4zM914.5 206.9h0.7v0.7h-0.7zM903.3 203.1h0.8v0.8h-0.8zM906.6 207.4h1.2v1.2h-1.2zM916.4 209.3h1.4v1.4h-1.4zM905.7 205.2h1.1v1.1h-1.1zM915.6 206.3h1.2v1.2h-1.2zM903.1 202.5h1.3v1.3h-1.3zM908.5 207.9h1.3v1.3h-1.3zM914.2 208.3h0.9v0.9h-0.9zM907.1 205.1h1.5v1.5h-1.5zM920.4 207.7h0.8v0.8h-0.8zM916.0 202.5h0.7v0.7h-0.7zM905.6 209.5h1.3v1.3h-1.3zM905.2 201.8h1.3v1.3h-1.3zM906.7 210.1h1.3v1.3h-1.3zM921.7 204.2h0.9v0.9h-0.9zM897.6 216.9h0.8v0.8h-0.8zM909.1 205.5h0.9v0.9h-0.9zM906.5 202.2h1.1v1.1h-1.1zM917.2 209.5h1.3v1.3h-1.3zM916.4 204.5h1.3v1.3h-1.3zM921.8 206.8h1.2v1.2h-1.2zM914.1 210.9h1.1v1.1h-1.1zM907.4 198.8h1.3v1.3h-1.3zM920.2 210.9h1.3v1.3h-1.3zM916.5 210.8h1.0v1.0h-1.0zM913.2 205.5h0.8v0.8h-0.8zM916.8 206.3h1.1v1.1h-1.1zM913.6 202.2h0.9v0.9h-0.9zM919.7 211.3h1.0v1.0h-1.0zM910.0 208.3h1.1v1.1h-1.1zM902.7 208.8h1.4v1.4h-1.4zM906.9 209.4h1.3v1.3h-1.3zM904.0 213.2h1.4v1.4h-1.4zM908.8 211.9h1.2v1.2h-1.2zM908.0 208.4h1.5v1.5h-1.5zM912.0 207.6h1.0v1.0h-1.0zM922.2 203.3h1.3v1.3h-1.3zM906.6 206.3h1.4v1.4h-1.4zM909.1 212.0h0.8v0.8h-0.8zM913.5 206.3h0.8v0.8h-0.8zM911.0 210.8h0.9v0.9h-0.9zM911.1 209.7h1.2v1.2h-1.2zM903.6 211.4h0.7v0.7h-0.7zM914.9 203.9h1.3v1.3h-1.3zM906.2 204.7h1.5v1.5h-1.5zM922.9 206.5h1.1v1.1h-1.1zM915.5 209.1h0.8v0.8h-0.8zM923.6 209.4h0.9v0.9h-0.9zM915.3 214.7h1.4v1.4h-1.4zM905.7 200.3h0.8v0.8h-0.8zM913.1 208.3h0.8v0.8h-0.8zM919.5 200.9h1.3v1.3h-1.3zM908.0 205.2h1.0v1.0h-1.0zM914.0 202.7h1.1v1.1h-1.1zM903.8 202.8h1.3v1.3h-1.3zM924.2 205.9h1.1v1.1h-1.1zM914.0 213.5h1.3v1.3h-1.3zM917.6 204.3h1.0v1.0h-1.0zM909.5 204.3h1.4v1.4h-1.4zM907.2 210.9h1.0v1.0h-1.0zM912.5 203.2h1.1v1.1h-1.1zM906.3 207.5h0.9v0.9h-0.9zM913.5 210.8h1.2v1.2h-1.2zM915.1 211.3h1.4v1.4h-1.4zM909.5 209.3h1.4v1.4h-1.4zM923.5 207.6h0.9v0.9h-0.9zM909.0 209.5h1.3v1.3h-1.3z" fill="#000" opacity="0.5"/><path d="M905.4 208.5h1.3v1.3h-1.3zM911.9 200.7h1.0v1.0h-1.0zM893.3 206.5h1.4v1.4h-1.4zM913.4 207.6h1.4v1.4h-1.4zM904.6 205.4h0.9v0.9h-0.9zM920.9 200.8h1.3v1.3h-1.3zM898.0 208.1h0.8v0.8h-0.8zM904.2 204.2h1.1v1.1h-1.1zM909.1 206.8h0.8v0.8h-0.8z" fill="#000" opacity="1.0"/><path d="M901.5 212.2h1.1v1.1h-1.1zM919.7 203.0h1.3v1.3h-1.3zM914.6 206.5h1.3v1.3h-1.3zM903.6 208.1h1.1v1.1h-1.1zM899.3 207.0h1.0v1.0h-1.0zM916.6 204.6h1.2v1.2h-1.2zM915.5 205.4h1.5v1.5h-1.5zM903.5 206.9h1.2v1.2h-1.2zM909.4 209.3h1.1v1.1h-1.1zM909.2 206.0h1.4v1.4h-1.4zM908.2 204.6h0.9v0.9h-0.9zM914.1 214.2h1.0v1.0h-1.0zM916.8 207.7h0.8v0.8h-0.8zM924.4 211.5h0.7v0.7h-0.7zM917.6 207.8h1.3v1.3h-1.3zM919.5 203.5h1.4v1.4h-1.4zM914.6 207.4h0.8v0.8h-0.8zM911.7 210.9h0.9v0.9h-0.9zM904.1 206.5h0.9v0.9h-0.9zM914.2 214.6h1.5v1.5h-1.5zM912.9 203.7h1.1v1.1h-1.1zM904.9 209.2h0.9v0.9h-0.9zM915.5 208.3h1.0v1.0h-1.0zM920.2 209.8h0.9v0.9h-0.9zM913.3 208.3h0.8v0.8h-0.8zM904.0 206.3h1.5v1.5h-1.5zM906.2 207.2h1.0v1.0h-1.0zM916.9 209.9h1.5v1.5h-1.5zM909.6 207.3h1.2v1.2h-1.2zM916.4 206.2h1.3v1.3h-1.3zM911.9 200.0h0.9v0.9h-0.9zM903.5 210.1h1.5v1.5h-1.5zM917.9 207.3h1.3v1.3h-1.3zM904.3 201.6h0.7v0.7h-0.7zM909.9 202.1h1.4v1.4h-1.4zM910.7 202.2h0.9v0.9h-0.9zM911.4 207.1h1.1v1.1h-1.1zM905.3 201.9h1.1v1.1h-1.1zM920.1 209.9h0.8v0.8h-0.8zM912.4 203.4h1.2v1.2h-1.2zM905.9 207.7h0.7v0.7h-0.7zM899.3 209.6h0.9v0.9h-0.9zM913.4 204.3h1.2v1.2h-1.2zM906.9 204.3h1.1v1.1h-1.1zM906.7 207.7h0.9v0.9h-0.9zM906.2 208.1h1.4v1.4h-1.4zM914.7 208.6h0.9v0.9h-0.9zM914.2 202.2h1.0v1.0h-1.0zM905.4 198.8h1.3v1.3h-1.3zM899.1 206.0h1.0v1.0h-1.0zM902.5 207.8h1.0v1.0h-1.0zM921.1 213.1h1.2v1.2h-1.2zM909.7 205.6h1.5v1.5h-1.5zM915.1 207.8h1.0v1.0h-1.0zM914.2 205.9h0.8v0.8h-0.8zM905.1 208.6h1.0v1.0h-1.0zM912.8 196.5h0.9v0.9h-0.9zM908.1 202.0h0.7v0.7h-0.7zM912.2 209.3h1.2v1.2h-1.2zM921.2 208.8h1.4v1.4h-1.4zM905.9 203.6h0.8v0.8h-0.8zM914.7 205.9h1.3v1.3h-1.3zM904.2 203.5h1.4v1.4h-1.4zM908.1 206.1h0.8v0.8h-0.8zM909.4 207.9h1.2v1.2h-1.2zM906.6 203.7h1.3v1.3h-1.3z" fill="#000" opacity="0.75"/></g><g filter="url(#bl03)"><path d="M942.7 214.4h1.0v1.0h-1.0zM943.3 211.2h1.5v1.5h-1.5zM945.0 204.9h1.3v1.3h-1.3zM944.2 208.3h1.4v1.4h-1.4zM947.0 205.7h0.8v0.8h-0.8zM949.6 207.2h1.2v1.2h-1.2zM941.2 205.3h1.0v1.0h-1.0zM955.8 197.8h1.4v1.4h-1.4zM945.8 202.9h1.4v1.4h-1.4zM944.5 205.5h1.3v1.3h-1.3zM949.3 204.7h1.1v1.1h-1.1zM944.0 199.6h1.1v1.1h-1.1zM943.5 212.0h1.5v1.5h-1.5zM944.5 206.5h1.0v1.0h-1.0zM943.6 201.2h1.2v1.2h-1.2zM945.3 192.0h0.9v0.9h-0.9zM943.1 203.1h1.0v1.0h-1.0zM939.3 211.4h0.9v0.9h-0.9zM942.6 210.5h1.3v1.3h-1.3zM941.7 211.2h1.4v1.4h-1.4zM948.1 202.4h0.8v0.8h-0.8zM947.5 202.9h1.0v1.0h-1.0zM934.1 209.5h1.4v1.4h-1.4zM948.8 195.8h1.2v1.2h-1.2zM945.0 211.9h1.2v1.2h-1.2zM934.4 211.2h1.2v1.2h-1.2zM947.5 209.5h0.9v0.9h-0.9zM953.3 208.0h0.8v0.8h-0.8zM942.8 203.0h0.9v0.9h-0.9zM946.7 213.5h1.3v1.3h-1.3zM946.5 209.5h1.0v1.0h-1.0zM947.8 201.7h1.3v1.3h-1.3zM938.1 209.3h1.1v1.1h-1.1zM939.8 202.8h0.8v0.8h-0.8zM935.8 209.7h1.4v1.4h-1.4zM952.8 202.9h0.9v0.9h-0.9zM949.6 199.2h1.3v1.3h-1.3zM949.9 193.4h0.7v0.7h-0.7zM942.1 215.1h1.3v1.3h-1.3zM940.8 210.4h1.0v1.0h-1.0zM947.8 211.9h1.5v1.5h-1.5zM944.7 211.7h0.9v0.9h-0.9zM940.9 206.3h0.8v0.8h-0.8zM945.3 192.2h1.4v1.4h-1.4zM949.0 215.3h0.9v0.9h-0.9zM941.4 200.9h0.7v0.7h-0.7zM939.9 208.1h0.9v0.9h-0.9zM947.0 206.1h1.5v1.5h-1.5zM942.4 201.2h1.2v1.2h-1.2zM947.8 199.8h1.3v1.3h-1.3zM942.1 205.8h1.3v1.3h-1.3zM937.1 214.3h0.8v0.8h-0.8zM942.1 208.5h1.1v1.1h-1.1zM952.0 196.4h1.5v1.5h-1.5zM945.4 202.0h1.4v1.4h-1.4zM944.7 200.4h1.1v1.1h-1.1zM944.2 214.3h0.7v0.7h-0.7zM947.4 205.6h1.3v1.3h-1.3zM945.4 203.8h1.4v1.4h-1.4zM952.1 205.0h1.3v1.3h-1.3zM952.8 195.5h1.4v1.4h-1.4zM946.7 209.7h0.8v0.8h-0.8zM941.3 212.6h1.3v1.3h-1.3zM944.4 219.6h1.3v1.3h-1.3zM939.8 211.0h1.2v1.2h-1.2zM946.2 202.2h1.3v1.3h-1.3zM948.8 206.1h0.9v0.9h-0.9zM946.2 206.8h0.9v0.9h-0.9zM949.9 201.6h1.4v1.4h-1.4zM941.8 208.3h1.3v1.3h-1.3zM943.4 210.4h1.3v1.3h-1.3zM943.3 195.8h1.4v1.4h-1.4zM952.2 203.2h1.0v1.0h-1.0zM940.4 211.6h0.8v0.8h-0.8zM946.8 200.8h1.2v1.2h-1.2z" fill="#000" opacity="0.5"/><path d="M944.5 205.1h0.7v0.7h-0.7zM943.0 196.3h1.1v1.1h-1.1zM947.7 194.7h1.3v1.3h-1.3zM937.1 211.4h1.1v1.1h-1.1zM939.9 197.9h1.2v1.2h-1.2zM943.9 208.9h1.4v1.4h-1.4zM957.2 198.8h1.1v1.1h-1.1zM951.5 212.9h1.0v1.0h-1.0zM950.3 206.1h1.0v1.0h-1.0zM945.6 205.7h1.2v1.2h-1.2zM947.5 204.7h1.0v1.0h-1.0zM942.7 205.4h1.3v1.3h-1.3zM944.7 211.8h1.3v1.3h-1.3zM954.3 210.9h1.4v1.4h-1.4zM951.9 203.7h1.4v1.4h-1.4zM950.8 204.0h0.7v0.7h-0.7zM940.6 218.5h1.1v1.1h-1.1zM942.3 209.5h1.1v1.1h-1.1zM945.0 217.3h1.4v1.4h-1.4zM945.4 206.4h1.2v1.2h-1.2zM941.9 211.1h1.0v1.0h-1.0zM940.7 208.1h1.1v1.1h-1.1zM947.4 216.3h1.2v1.2h-1.2zM947.7 205.2h0.7v0.7h-0.7zM947.7 216.8h1.2v1.2h-1.2zM946.2 203.5h1.3v1.3h-1.3zM945.1 200.0h1.1v1.1h-1.1zM947.5 205.7h0.8v0.8h-0.8zM950.4 205.0h1.1v1.1h-1.1zM942.4 210.5h1.3v1.3h-1.3zM940.1 215.1h1.0v1.0h-1.0zM938.7 214.9h0.8v0.8h-0.8zM939.3 206.1h1.1v1.1h-1.1zM949.6 201.1h1.1v1.1h-1.1zM949.2 203.3h1.3v1.3h-1.3zM941.9 206.8h0.9v0.9h-0.9zM944.6 211.6h0.8v0.8h-0.8zM953.9 199.3h0.9v0.9h-0.9zM941.0 215.2h0.8v0.8h-0.8zM949.5 197.6h0.9v0.9h-0.9zM944.1 196.8h0.9v0.9h-0.9zM941.3 205.9h1.3v1.3h-1.3zM943.3 204.7h1.2v1.2h-1.2zM947.5 206.4h1.0v1.0h-1.0zM942.8 210.0h0.8v0.8h-0.8zM941.1 211.4h1.1v1.1h-1.1zM946.0 209.2h1.3v1.3h-1.3zM944.8 210.8h1.0v1.0h-1.0zM941.0 202.7h1.2v1.2h-1.2zM941.9 199.6h0.7v0.7h-0.7zM944.2 201.0h1.2v1.2h-1.2zM937.4 200.5h1.0v1.0h-1.0zM946.0 199.6h1.0v1.0h-1.0zM940.5 209.2h0.7v0.7h-0.7zM949.8 207.5h1.3v1.3h-1.3zM946.9 206.8h0.9v0.9h-0.9zM946.6 211.9h1.0v1.0h-1.0zM947.8 206.2h1.3v1.3h-1.3zM945.2 205.7h1.1v1.1h-1.1zM945.1 204.4h0.9v0.9h-0.9zM943.7 205.2h0.8v0.8h-0.8zM944.4 208.9h0.8v0.8h-0.8zM944.6 206.4h0.9v0.9h-0.9zM943.3 214.7h1.0v1.0h-1.0zM954.3 213.0h0.9v0.9h-0.9zM947.6 211.7h0.9v0.9h-0.9zM942.8 199.9h1.3v1.3h-1.3z" fill="#000" opacity="0.75"/><path d="M949.4 202.2h1.2v1.2h-1.2zM957.6 195.7h1.2v1.2h-1.2zM949.0 214.7h1.0v1.0h-1.0zM939.7 215.9h1.4v1.4h-1.4zM943.6 209.0h1.2v1.2h-1.2zM944.3 213.1h1.2v1.2h-1.2zM950.0 210.0h1.2v1.2h-1.2zM946.6 197.2h0.7v0.7h-0.7zM944.5 213.3h1.3v1.3h-1.3zM949.8 204.0h0.9v0.9h-0.9zM940.4 208.6h1.4v1.4h-1.4zM942.2 211.8h0.9v0.9h-0.9zM943.2 203.5h1.3v1.3h-1.3zM939.9 208.6h1.3v1.3h-1.3zM946.6 208.7h0.8v0.8h-0.8zM947.5 213.2h0.7v0.7h-0.7zM945.8 205.3h0.8v0.8h-0.8zM950.8 206.6h1.3v1.3h-1.3zM948.0 200.3h1.3v1.3h-1.3zM939.7 200.2h0.9v0.9h-0.9zM943.2 203.7h0.9v0.9h-0.9zM941.3 212.0h1.3v1.3h-1.3zM949.4 206.8h1.1v1.1h-1.1zM951.5 207.0h1.1v1.1h-1.1zM944.5 219.3h1.2v1.2h-1.2zM942.5 212.6h1.4v1.4h-1.4zM950.9 199.1h1.2v1.2h-1.2zM944.3 211.5h1.3v1.3h-1.3zM947.9 210.0h0.9v0.9h-0.9zM947.6 200.4h0.8v0.8h-0.8zM947.7 208.1h1.3v1.3h-1.3zM942.1 207.0h0.9v0.9h-0.9zM942.3 208.3h0.7v0.7h-0.7zM945.1 213.7h0.7v0.7h-0.7zM940.5 207.5h1.3v1.3h-1.3zM944.4 209.7h1.1v1.1h-1.1zM943.8 202.3h0.8v0.8h-0.8zM949.9 200.3h1.0v1.0h-1.0zM945.8 191.4h1.2v1.2h-1.2zM946.5 208.1h0.8v0.8h-0.8zM949.4 211.8h1.4v1.4h-1.4zM946.1 201.1h1.1v1.1h-1.1zM947.6 210.9h1.5v1.5h-1.5zM941.8 198.7h1.1v1.1h-1.1zM944.9 209.4h1.4v1.4h-1.4zM939.6 212.4h1.1v1.1h-1.1zM950.2 201.3h1.4v1.4h-1.4zM941.3 203.9h1.3v1.3h-1.3z" fill="#000" opacity="0.25"/></g><circle cx="979.5" cy="206" r="9.5" fill="url(#rgs)" opacity="0.85"/><g filter="url(#bl03)"><path d="M979.2 208.5h0.8v0.8h-0.8zM984.0 208.2h1.2v1.2h-1.2zM979.4 202.2h0.9v0.9h-0.9zM983.7 197.4h1.1v1.1h-1.1zM976.2 213.1h1.0v1.0h-1.0zM980.7 204.4h1.0v1.0h-1.0zM975.6 205.9h0.9v0.9h-0.9zM988.9 201.7h0.9v0.9h-0.9zM984.9 202.2h1.1v1.1h-1.1zM973.4 205.7h1.0v1.0h-1.0zM986.3 208.2h0.8v0.8h-0.8zM974.1 206.9h1.2v1.2h-1.2zM975.9 207.9h1.0v1.0h-1.0zM973.5 213.0h0.8v0.8h-0.8zM981.1 204.6h0.6v0.6h-0.6zM979.7 198.6h0.7v0.7h-0.7zM981.6 211.4h0.6v0.6h-0.6zM983.4 206.5h1.2v1.2h-1.2zM968.1 212.9h1.0v1.0h-1.0zM978.1 209.4h0.9v0.9h-0.9zM982.2 206.9h1.1v1.1h-1.1zM978.4 208.4h1.2v1.2h-1.2zM979.5 207.8h0.6v0.6h-0.6zM977.6 203.2h0.6v0.6h-0.6zM979.1 224.8h0.7v0.7h-0.7zM979.8 200.5h1.2v1.2h-1.2zM979.3 211.5h0.6v0.6h-0.6zM979.1 217.3h1.1v1.1h-1.1zM983.1 206.8h0.7v0.7h-0.7zM985.3 203.0h1.2v1.2h-1.2zM985.4 201.4h1.1v1.1h-1.1zM976.6 206.1h0.7v0.7h-0.7zM988.9 198.8h0.8v0.8h-0.8zM981.4 198.6h1.1v1.1h-1.1zM978.2 204.6h1.1v1.1h-1.1zM986.9 204.4h0.6v0.6h-0.6zM980.9 204.1h1.1v1.1h-1.1zM983.9 201.3h1.1v1.1h-1.1zM976.7 201.7h1.1v1.1h-1.1zM973.8 202.5h1.1v1.1h-1.1zM982.3 209.9h1.1v1.1h-1.1zM989.3 206.7h1.1v1.1h-1.1zM973.9 204.6h1.1v1.1h-1.1zM979.6 212.2h1.2v1.2h-1.2zM984.7 211.0h1.1v1.1h-1.1zM981.6 203.6h0.8v0.8h-0.8zM970.5 210.5h0.7v0.7h-0.7zM980.4 208.7h0.9v0.9h-0.9zM976.4 212.3h0.9v0.9h-0.9zM976.9 206.2h0.7v0.7h-0.7zM973.3 213.2h1.2v1.2h-1.2zM975.7 199.4h0.8v0.8h-0.8zM967.4 208.4h0.8v0.8h-0.8zM980.7 198.8h0.9v0.9h-0.9zM979.7 200.9h1.0v1.0h-1.0zM981.6 207.5h1.1v1.1h-1.1zM983.3 203.0h0.9v0.9h-0.9zM982.4 213.1h0.8v0.8h-0.8zM980.1 206.2h1.2v1.2h-1.2zM982.1 196.7h1.2v1.2h-1.2zM979.9 191.8h0.7v0.7h-0.7zM975.0 198.0h1.0v1.0h-1.0zM975.0 217.7h0.8v0.8h-0.8zM985.7 200.9h0.8v0.8h-0.8zM975.5 212.7h1.2v1.2h-1.2zM974.6 209.2h1.1v1.1h-1.1zM978.3 206.5h0.7v0.7h-0.7zM991.1 205.1h1.0v1.0h-1.0zM986.3 200.1h0.7v0.7h-0.7zM975.0 218.5h0.7v0.7h-0.7zM976.1 199.8h1.2v1.2h-1.2zM976.2 217.0h1.0v1.0h-1.0zM971.5 195.0h1.1v1.1h-1.1zM971.3 202.9h1.0v1.0h-1.0zM975.9 205.9h1.1v1.1h-1.1zM982.0 207.4h1.1v1.1h-1.1zM972.7 211.2h1.1v1.1h-1.1zM974.7 209.7h0.6v0.6h-0.6zM992.6 207.6h0.7v0.7h-0.7zM984.8 197.8h0.7v0.7h-0.7zM970.5 207.3h0.7v0.7h-0.7zM971.4 213.2h1.1v1.1h-1.1zM984.9 210.7h1.1v1.1h-1.1zM976.2 202.9h1.1v1.1h-1.1zM974.9 216.7h1.0v1.0h-1.0zM984.7 196.2h1.1v1.1h-1.1zM974.4 199.0h1.0v1.0h-1.0zM984.0 205.6h0.6v0.6h-0.6zM972.2 206.1h1.0v1.0h-1.0zM979.6 208.0h1.1v1.1h-1.1zM978.1 203.5h1.2v1.2h-1.2zM978.8 206.0h1.1v1.1h-1.1zM976.0 206.4h0.8v0.8h-0.8zM978.9 196.1h0.8v0.8h-0.8zM979.3 195.2h0.8v0.8h-0.8zM981.0 197.8h0.9v0.9h-0.9zM990.2 207.3h1.2v1.2h-1.2z" fill="#000" opacity="0.25"/><path d="M980.2 208.3h0.7v0.7h-0.7zM989.7 197.8h1.0v1.0h-1.0zM974.4 199.2h0.8v0.8h-0.8zM981.0 205.4h1.2v1.2h-1.2zM974.4 200.7h1.0v1.0h-1.0zM977.3 204.4h0.8v0.8h-0.8zM973.5 202.8h0.9v0.9h-0.9zM976.4 199.0h0.8v0.8h-0.8zM976.8 203.8h0.6v0.6h-0.6zM982.5 208.3h0.7v0.7h-0.7zM977.9 208.5h0.6v0.6h-0.6zM987.5 205.8h1.2v1.2h-1.2zM977.9 205.1h0.8v0.8h-0.8z" fill="#000" opacity="0.5"/><path d="M981.4 209.9h1.1v1.1h-1.1zM968.8 215.3h0.8v0.8h-0.8zM980.3 216.8h0.7v0.7h-0.7zM979.1 206.4h1.2v1.2h-1.2zM972.5 207.2h0.6v0.6h-0.6zM969.2 210.3h1.1v1.1h-1.1zM967.7 203.0h1.0v1.0h-1.0zM975.9 205.5h0.7v0.7h-0.7zM972.0 196.8h1.0v1.0h-1.0zM978.3 205.3h1.0v1.0h-1.0z" fill="#000" opacity="0.0"/></g><rect x="855.6" y="218.4" width="3.8" height="3.8" fill="#7f96f5"/><path d="M853.8 218.9h5.4v1.2h-5.4zM855.9 216.8h1.2v5.4h-1.2z" fill="#000"/><rect x="889.6" y="218.4" width="3.8" height="3.8" fill="#f57f7f"/><path d="M887.8 218.9h5.4v1.2h-5.4zM889.9 216.8h1.2v5.4h-1.2z" fill="#000"/><rect x="923.6" y="218.4" width="3.8" height="3.8" fill="#f57f7f"/><path d="M921.8 218.9h5.4v1.2h-5.4zM923.9 216.8h1.2v5.4h-1.2z" fill="#000"/><rect x="957.6" y="218.4" width="3.8" height="3.8" fill="#f57f7f"/><path d="M955.8 218.9h5.4v1.2h-5.4zM957.9 216.8h1.2v5.4h-1.2z" fill="#000"/><rect x="991.6" y="218.4" width="3.8" height="3.8" fill="#f57f7f"/><path d="M989.8 218.9h5.4v1.2h-5.4zM991.9 216.8h1.2v5.4h-1.2z" fill="#000"/><circle cx="842" cy="241" r="8" fill="#1a1a1a" filter="url(#bl1)" opacity="0.8"/><g filter="url(#bl03)"><path d="M834.9 234.1h1.3v1.3h-1.3zM846.2 241.3h0.9v0.9h-0.9zM846.0 254.7h1.3v1.3h-1.3zM845.5 229.6h0.7v0.7h-0.7zM846.6 244.0h1.2v1.2h-1.2zM843.7 238.3h1.3v1.3h-1.3zM839.2 242.9h1.0v1.0h-1.0zM836.8 239.5h1.2v1.2h-1.2zM839.5 238.8h1.2v1.2h-1.2zM847.8 240.0h1.5v1.5h-1.5zM849.4 241.6h0.9v0.9h-0.9zM839.8 232.8h1.1v1.1h-1.1zM844.3 237.5h1.2v1.2h-1.2zM841.2 237.9h0.9v0.9h-0.9zM842.6 247.9h0.7v0.7h-0.7zM844.3 244.8h1.2v1.2h-1.2zM841.3 242.8h0.7v0.7h-0.7zM836.0 246.9h1.3v1.3h-1.3zM831.7 244.9h1.2v1.2h-1.2zM845.9 245.1h1.4v1.4h-1.4zM836.1 243.6h1.3v1.3h-1.3zM844.5 235.2h0.7v0.7h-0.7zM832.8 242.4h1.0v1.0h-1.0zM840.4 245.5h1.2v1.2h-1.2zM848.4 243.6h1.4v1.4h-1.4zM837.1 251.6h1.2v1.2h-1.2zM855.4 234.1h1.2v1.2h-1.2zM836.4 241.7h1.3v1.3h-1.3zM840.0 240.8h0.9v0.9h-0.9zM848.1 229.1h1.0v1.0h-1.0zM847.3 243.6h1.4v1.4h-1.4zM842.4 242.1h1.4v1.4h-1.4zM839.4 239.1h0.9v0.9h-0.9zM837.4 246.0h1.2v1.2h-1.2zM840.1 247.3h1.2v1.2h-1.2zM836.9 246.4h1.3v1.3h-1.3zM839.5 235.0h1.2v1.2h-1.2zM846.4 234.4h0.7v0.7h-0.7zM847.6 245.5h1.4v1.4h-1.4zM837.6 242.8h1.1v1.1h-1.1zM838.3 242.8h1.1v1.1h-1.1zM848.2 238.5h1.1v1.1h-1.1zM837.5 235.7h1.4v1.4h-1.4z" fill="#000" opacity="1.0"/><path d="M841.1 227.5h0.7v0.7h-0.7zM842.3 237.5h1.3v1.3h-1.3zM846.0 237.9h1.0v1.0h-1.0zM851.0 241.2h1.0v1.0h-1.0zM844.9 234.8h1.0v1.0h-1.0zM854.9 234.9h1.0v1.0h-1.0zM834.7 252.5h1.1v1.1h-1.1zM840.5 244.4h0.8v0.8h-0.8zM849.4 240.4h1.0v1.0h-1.0zM832.7 234.8h1.1v1.1h-1.1zM854.5 245.6h0.7v0.7h-0.7zM834.8 233.3h0.8v0.8h-0.8zM848.9 250.3h0.9v0.9h-0.9zM853.7 240.9h1.5v1.5h-1.5zM832.3 241.7h1.1v1.1h-1.1zM850.2 238.9h1.1v1.1h-1.1zM847.7 250.9h1.4v1.4h-1.4zM838.6 232.1h1.3v1.3h-1.3zM843.5 233.2h1.2v1.2h-1.2zM837.8 241.8h0.7v0.7h-0.7zM843.0 253.9h0.7v0.7h-0.7zM857.2 236.8h1.2v1.2h-1.2zM837.5 245.5h0.9v0.9h-0.9zM838.2 238.4h1.5v1.5h-1.5zM837.5 243.7h1.5v1.5h-1.5zM842.9 236.6h0.9v0.9h-0.9zM847.0 240.6h1.2v1.2h-1.2zM837.0 234.6h1.3v1.3h-1.3zM842.3 235.9h1.1v1.1h-1.1zM839.9 248.1h1.1v1.1h-1.1zM841.7 233.0h0.7v0.7h-0.7zM837.5 244.9h1.4v1.4h-1.4zM846.9 247.7h1.0v1.0h-1.0zM840.7 239.8h0.8v0.8h-0.8zM844.3 238.8h1.0v1.0h-1.0zM836.4 236.9h1.5v1.5h-1.5zM838.8 240.7h0.9v0.9h-0.9zM849.7 245.5h0.8v0.8h-0.8zM838.3 238.5h1.4v1.4h-1.4zM843.4 238.0h1.2v1.2h-1.2zM842.5 246.4h1.2v1.2h-1.2zM835.5 236.7h1.3v1.3h-1.3zM829.6 243.3h1.2v1.2h-1.2zM839.3 241.6h0.8v0.8h-0.8zM837.8 245.2h1.4v1.4h-1.4zM841.9 245.8h0.8v0.8h-0.8zM839.7 249.7h1.3v1.3h-1.3zM828.8 250.4h1.0v1.0h-1.0zM824.7 235.6h1.1v1.1h-1.1zM843.9 242.3h1.4v1.4h-1.4zM840.3 242.3h0.9v0.9h-0.9zM849.1 237.2h1.4v1.4h-1.4zM839.7 247.1h1.4v1.4h-1.4zM839.7 243.1h0.8v0.8h-0.8zM838.7 238.2h1.0v1.0h-1.0zM841.6 238.3h1.1v1.1h-1.1zM845.9 244.5h1.4v1.4h-1.4zM838.7 243.6h0.9v0.9h-0.9zM836.8 238.8h1.3v1.3h-1.3zM846.9 234.3h1.0v1.0h-1.0zM845.4 234.9h0.7v0.7h-0.7zM849.8 246.5h1.4v1.4h-1.4zM834.0 240.4h0.8v0.8h-0.8zM841.4 242.3h0.9v0.9h-0.9zM840.9 236.0h1.4v1.4h-1.4zM841.6 241.3h1.0v1.0h-1.0zM840.7 235.3h1.4v1.4h-1.4zM846.2 248.4h1.3v1.3h-1.3zM845.8 240.2h0.7v0.7h-0.7zM834.5 237.9h0.8v0.8h-0.8zM843.2 250.2h1.4v1.4h-1.4zM844.2 242.7h0.8v0.8h-0.8zM847.3 244.1h1.1v1.1h-1.1zM842.6 231.4h0.9v0.9h-0.9zM843.9 233.4h0.9v0.9h-0.9zM846.2 235.1h0.7v0.7h-0.7zM842.7 249.9h0.8v0.8h-0.8zM831.4 250.2h0.8v0.8h-0.8zM842.2 240.4h1.3v1.3h-1.3zM846.5 241.5h1.1v1.1h-1.1zM835.7 243.4h0.8v0.8h-0.8zM827.8 248.5h1.5v1.5h-1.5zM837.8 243.3h1.1v1.1h-1.1zM840.5 238.3h0.8v0.8h-0.8zM843.4 240.4h0.8v0.8h-0.8zM844.5 242.6h1.2v1.2h-1.2zM859.0 235.4h0.9v0.9h-0.9zM836.1 239.9h1.4v1.4h-1.4zM831.3 237.4h0.8v0.8h-0.8zM834.3 241.3h0.9v0.9h-0.9zM844.4 241.9h1.0v1.0h-1.0zM835.5 246.4h0.9v0.9h-0.9zM846.6 236.5h1.4v1.4h-1.4zM843.8 241.1h1.4v1.4h-1.4zM843.2 239.8h1.2v1.2h-1.2zM840.5 232.9h1.2v1.2h-1.2zM843.7 238.5h1.3v1.3h-1.3zM847.5 237.1h0.8v0.8h-0.8zM839.8 238.0h0.8v0.8h-0.8zM848.2 236.5h1.2v1.2h-1.2zM841.7 246.6h1.4v1.4h-1.4zM836.1 234.8h1.5v1.5h-1.5zM835.6 246.7h1.3v1.3h-1.3zM847.7 236.7h0.8v0.8h-0.8zM842.2 242.4h1.2v1.2h-1.2zM835.7 246.8h1.4v1.4h-1.4zM858.6 253.5h0.8v0.8h-0.8zM840.9 246.3h1.4v1.4h-1.4zM836.6 244.0h1.5v1.5h-1.5zM831.9 246.5h1.2v1.2h-1.2z" fill="#000" opacity="0.5"/><path d="M850.1 238.0h1.4v1.4h-1.4zM841.4 239.0h1.5v1.5h-1.5zM836.7 246.9h0.7v0.7h-0.7zM834.4 222.2h0.8v0.8h-0.8zM843.8 250.0h1.2v1.2h-1.2zM840.4 244.5h0.9v0.9h-0.9zM840.9 242.2h1.2v1.2h-1.2zM863.3 238.1h1.3v1.3h-1.3zM843.3 241.9h0.9v0.9h-0.9zM847.3 236.6h1.3v1.3h-1.3zM842.4 242.3h0.9v0.9h-0.9zM838.1 235.9h1.5v1.5h-1.5zM851.7 244.9h1.0v1.0h-1.0zM843.8 240.2h0.9v0.9h-0.9zM844.2 236.3h0.8v0.8h-0.8zM842.1 243.1h1.3v1.3h-1.3zM843.5 245.7h1.0v1.0h-1.0zM841.3 250.0h0.9v0.9h-0.9zM842.7 233.4h0.7v0.7h-0.7zM826.5 237.8h1.2v1.2h-1.2zM834.3 233.5h1.0v1.0h-1.0zM838.9 234.4h0.9v0.9h-0.9zM845.2 243.3h0.8v0.8h-0.8zM826.6 241.4h1.5v1.5h-1.5zM850.8 238.4h1.1v1.1h-1.1zM849.1 236.0h1.2v1.2h-1.2zM847.8 242.4h1.0v1.0h-1.0zM840.8 255.5h0.9v0.9h-0.9zM844.4 229.9h0.9v0.9h-0.9zM837.5 243.9h0.8v0.8h-0.8zM840.7 235.0h1.4v1.4h-1.4zM839.3 241.6h1.3v1.3h-1.3zM844.7 234.2h0.8v0.8h-0.8zM836.3 232.7h1.3v1.3h-1.3zM843.0 237.6h1.1v1.1h-1.1zM844.6 231.0h1.4v1.4h-1.4z" fill="#000" opacity="0.25"/><path d="M837.6 241.9h1.1v1.1h-1.1zM839.7 238.9h0.7v0.7h-0.7zM843.1 245.0h1.5v1.5h-1.5zM838.3 255.8h1.1v1.1h-1.1zM843.3 242.7h0.9v0.9h-0.9zM842.0 229.4h0.7v0.7h-0.7zM848.3 254.6h0.9v0.9h-0.9zM831.8 239.4h0.8v0.8h-0.8zM846.1 243.5h1.3v1.3h-1.3zM835.2 249.1h1.3v1.3h-1.3zM836.8 232.3h1.0v1.0h-1.0zM840.7 247.8h1.3v1.3h-1.3zM838.1 254.9h1.2v1.2h-1.2zM849.5 241.5h0.9v0.9h-0.9zM831.2 243.6h1.2v1.2h-1.2zM837.0 248.0h1.3v1.3h-1.3zM835.2 250.3h1.4v1.4h-1.4zM856.9 238.8h1.1v1.1h-1.1zM834.6 233.7h1.2v1.2h-1.2zM845.5 241.6h1.1v1.1h-1.1zM836.3 242.3h1.2v1.2h-1.2zM840.9 247.1h0.8v0.8h-0.8zM844.6 235.3h1.4v1.4h-1.4zM839.7 243.4h1.2v1.2h-1.2zM842.2 240.8h0.8v0.8h-0.8zM840.5 247.7h0.8v0.8h-0.8zM837.3 242.7h1.3v1.3h-1.3zM829.1 244.7h1.4v1.4h-1.4zM852.4 242.0h1.0v1.0h-1.0zM838.8 251.8h0.8v0.8h-0.8zM839.8 235.0h0.9v0.9h-0.9zM844.8 239.2h1.1v1.1h-1.1zM836.6 241.1h0.8v0.8h-0.8zM842.9 238.9h0.9v0.9h-0.9zM844.3 232.4h0.7v0.7h-0.7zM843.9 241.9h1.2v1.2h-1.2zM850.7 244.2h0.8v0.8h-0.8zM828.8 240.5h1.1v1.1h-1.1zM841.4 248.6h0.9v0.9h-0.9zM841.7 237.2h1.3v1.3h-1.3zM837.2 250.6h0.7v0.7h-0.7zM845.2 242.1h1.5v1.5h-1.5zM842.5 243.9h1.5v1.5h-1.5zM839.6 243.1h1.4v1.4h-1.4zM844.1 235.0h1.4v1.4h-1.4zM832.4 251.4h1.3v1.3h-1.3zM827.8 243.6h0.8v0.8h-0.8zM837.2 242.0h1.3v1.3h-1.3zM845.1 247.5h1.0v1.0h-1.0zM846.5 243.6h0.8v0.8h-0.8zM849.4 241.8h1.1v1.1h-1.1zM845.9 244.4h0.8v0.8h-0.8zM842.1 243.5h1.0v1.0h-1.0zM837.4 243.5h1.3v1.3h-1.3zM848.9 235.7h1.3v1.3h-1.3zM840.7 231.8h0.9v0.9h-0.9zM841.5 241.8h1.2v1.2h-1.2zM840.4 234.7h1.5v1.5h-1.5zM849.7 242.6h1.1v1.1h-1.1zM839.3 244.6h1.5v1.5h-1.5zM843.5 235.9h1.2v1.2h-1.2zM847.4 228.5h1.3v1.3h-1.3zM831.5 238.5h1.0v1.0h-1.0zM846.8 243.9h1.2v1.2h-1.2zM841.5 238.7h1.3v1.3h-1.3zM854.3 237.6h1.3v1.3h-1.3zM841.4 232.8h0.9v0.9h-0.9zM845.5 238.3h1.5v1.5h-1.5zM834.6 230.4h1.4v1.4h-1.4zM839.8 242.9h1.3v1.3h-1.3zM849.2 244.0h1.4v1.4h-1.4zM841.1 234.8h1.0v1.0h-1.0zM846.2 238.1h0.9v0.9h-0.9zM834.8 236.2h1.3v1.3h-1.3zM846.8 247.8h0.8v0.8h-0.8zM841.0 230.0h1.3v1.3h-1.3zM837.3 245.7h1.2v1.2h-1.2zM848.0 246.4h1.0v1.0h-1.0zM838.3 244.4h1.1v1.1h-1.1zM847.6 244.9h1.5v1.5h-1.5zM833.9 247.5h1.0v1.0h-1.0zM852.2 242.5h1.0v1.0h-1.0zM842.5 228.4h0.8v0.8h-0.8zM840.9 251.0h1.0v1.0h-1.0zM846.2 246.9h1.5v1.5h-1.5zM842.4 248.8h0.9v0.9h-0.9zM841.6 237.8h1.1v1.1h-1.1zM852.3 241.5h1.0v1.0h-1.0zM833.8 234.2h0.7v0.7h-0.7zM844.2 240.0h1.1v1.1h-1.1zM846.6 240.0h0.9v0.9h-0.9zM841.7 236.3h1.4v1.4h-1.4zM843.3 242.5h1.3v1.3h-1.3zM844.8 240.1h0.8v0.8h-0.8zM843.9 242.2h1.1v1.1h-1.1zM849.5 235.0h0.8v0.8h-0.8zM841.9 241.3h1.3v1.3h-1.3zM840.5 242.9h1.0v1.0h-1.0zM844.9 244.7h1.1v1.1h-1.1zM842.7 235.6h0.8v0.8h-0.8zM840.8 244.6h1.5v1.5h-1.5zM839.6 240.4h1.5v1.5h-1.5zM835.7 237.8h0.9v0.9h-0.9zM841.7 247.8h1.3v1.3h-1.3zM844.7 244.0h1.3v1.3h-1.3zM847.5 244.5h1.2v1.2h-1.2zM846.8 248.9h0.8v0.8h-0.8zM841.9 246.6h0.7v0.7h-0.7zM849.3 248.1h1.0v1.0h-1.0zM846.9 239.2h1.4v1.4h-1.4zM841.2 233.9h1.3v1.3h-1.3z" fill="#000" opacity="0.75"/></g><rect x="855.6" y="252.4" width="3.8" height="3.8" fill="#f57f7f"/><path d="M853.8 252.9h5.4v1.2h-5.4zM855.9 250.8h1.2v5.4h-1.2z" fill="#000"/><path d="M869.5 226.4L872.6 233.2" stroke="#9a9a9a" stroke-width="1.6" stroke-linecap="round"/><path d="M894 251.6L894 257L888.6 257Z" fill="#f57f7f"/><circle cx="913.6" cy="226.4" r="1.1" fill="#111" opacity="1" filter="url(#bl05)"/><circle cx="925.4" cy="236.6" r="1.2" fill="#111" opacity="0.9" filter="url(#bl05)"/><circle cx="916" cy="237.8" r="1.3" fill="#111" opacity="0.6" filter="url(#bl05)"/><circle cx="910.6" cy="241.4" r="1.2" fill="#111" opacity="0.5" filter="url(#bl05)"/><circle cx="919.4" cy="240.6" r="0.9" fill="#111" opacity="0.6" filter="url(#bl05)"/><circle cx="904.4" cy="244" r="1.3" fill="#111" opacity="0.8" filter="url(#bl05)"/><circle cx="902.6" cy="244.4" r="1" fill="#111" opacity="0.5" filter="url(#bl05)"/><circle cx="917" cy="248.8" r="1.5" fill="#111" opacity="0.6" filter="url(#bl05)"/><circle cx="907" cy="243.6" r="0.8" fill="#111" opacity="0.4" filter="url(#bl05)"/><circle cx="914" cy="232.6" r="0.6" fill="#111" opacity="0.4" filter="url(#bl05)"/><path d="M921.8 252.9h5.4v1.2h-5.4zM923.9 250.8h1.2v5.4h-1.2z" fill="#000"/><circle cx="946.8" cy="226.4" r="1.3" fill="#111" opacity="0.9" filter="url(#bl05)"/><circle cx="934" cy="231" r="1.1" fill="#111" opacity="0.8" filter="url(#bl05)"/><circle cx="950.6" cy="229.6" r="1.3" fill="#111" opacity="0.6" filter="url(#bl05)"/><circle cx="949.4" cy="232.6" r="1.2" fill="#111" opacity="0.6" filter="url(#bl05)"/><circle cx="944.4" cy="234.6" r="0.9" fill="#111" opacity="0.7" filter="url(#bl05)"/><circle cx="936.6" cy="236.6" r="1" fill="#111" opacity="0.8" filter="url(#bl05)"/><circle cx="949.8" cy="237.6" r="1.6" fill="#111" opacity="0.9" filter="url(#bl05)"/><circle cx="959" cy="236.6" r="1.4" fill="#111" opacity="0.8" filter="url(#bl05)"/><circle cx="945" cy="240.4" r="1.4" fill="#111" opacity="0.8" filter="url(#bl05)"/><circle cx="953" cy="240.8" r="1.5" fill="#111" opacity="0.8" filter="url(#bl05)"/><circle cx="955.6" cy="239.6" r="1" fill="#111" opacity="0.6" filter="url(#bl05)"/><circle cx="942.4" cy="242.6" r="1.4" fill="#111" opacity="0.8" filter="url(#bl05)"/><circle cx="937.6" cy="244.6" r="1.2" fill="#111" opacity="0.9" filter="url(#bl05)"/><circle cx="939.8" cy="244" r="1" fill="#111" opacity="0.7" filter="url(#bl05)"/><circle cx="948" cy="245" r="1.2" fill="#111" opacity="0.8" filter="url(#bl05)"/><circle cx="954.6" cy="245.6" r="1.2" fill="#111" opacity="0.7" filter="url(#bl05)"/><circle cx="942" cy="247.6" r="1" fill="#111" opacity="0.8" filter="url(#bl05)"/><circle cx="950.8" cy="249.4" r="1.7" fill="#111" opacity="0.8" filter="url(#bl05)"/><circle cx="947.6" cy="247.8" r="0.9" fill="#111" opacity="0.6" filter="url(#bl05)"/><path d="M955.8 252.9h5.4v1.2h-5.4zM957.9 250.8h1.2v5.4h-1.2z" fill="#000"/><circle cx="970.8" cy="227" r="0.55" fill="#111" opacity="0.9"/><circle cx="978.6" cy="226.6" r="0.55" fill="#111" opacity="0.9"/><circle cx="986.8" cy="228" r="0.55" fill="#111" opacity="0.9"/><circle cx="973.6" cy="233" r="0.55" fill="#111" opacity="0.9"/><circle cx="982" cy="230.4" r="0.55" fill="#111" opacity="0.9"/><circle cx="988.4" cy="231.8" r="0.55" fill="#111" opacity="0.9"/><circle cx="993" cy="231.6" r="0.55" fill="#111" opacity="0.9"/><circle cx="968" cy="232.6" r="0.55" fill="#111" opacity="0.9"/><circle cx="976.4" cy="237" r="0.55" fill="#111" opacity="0.9"/><circle cx="984.4" cy="236.6" r="0.6" fill="#111" opacity="0.9"/><circle cx="991" cy="236.8" r="0.55" fill="#111" opacity="0.9"/><circle cx="970.6" cy="242.6" r="0.55" fill="#111" opacity="0.9"/><circle cx="979" cy="242.8" r="0.6" fill="#111" opacity="0.9"/><circle cx="985.4" cy="240" r="0.55" fill="#111" opacity="0.9"/><circle cx="992.6" cy="241.6" r="0.55" fill="#111" opacity="0.9"/><circle cx="973.8" cy="247.6" r="0.6" fill="#111" opacity="0.9"/><circle cx="982.4" cy="247.8" r="0.6" fill="#111" opacity="0.9"/><circle cx="988" cy="246.6" r="0.55" fill="#111" opacity="0.9"/><circle cx="977" cy="250" r="0.6" fill="#111" opacity="0.9"/><circle cx="984.4" cy="251.2" r="0.55" fill="#111" opacity="0.9"/><circle cx="968.4" cy="238" r="0.5" fill="#111" opacity="0.9"/><circle cx="994.4" cy="236.4" r="0.5" fill="#111" opacity="0.9"/><g fill="none" stroke="#222" stroke-width="0.8"><circle cx="847.2" cy="281.1" r="2.6"/><circle cx="838.4" cy="274.6" r="2.9"/><circle cx="845.5" cy="267.3" r="2.4"/><circle cx="843.0" cy="274.6" r="2.2"/><circle cx="840.7" cy="272.7" r="2.9"/><circle cx="843.5" cy="278.8" r="1.7"/><circle cx="851.6" cy="273.9" r="3.0"/><circle cx="841.6" cy="272.8" r="2.1"/><circle cx="839.6" cy="274.1" r="3.1"/><circle cx="840.3" cy="276.9" r="2.9"/><circle cx="849.8" cy="280.8" r="2.3"/><circle cx="837.5" cy="272.1" r="2.4"/><circle cx="843.7" cy="275.8" r="3.0"/><circle cx="843.8" cy="282.8" r="1.9"/><circle cx="852.3" cy="272.2" r="2.8"/><circle cx="843.6" cy="266.4" r="2.8"/><circle cx="848.0" cy="278.8" r="2.9"/><circle cx="845.9" cy="283.2" r="3.0"/><circle cx="837.9" cy="277.3" r="2.3"/><circle cx="835.5" cy="280.6" r="2.2"/><circle cx="846.0" cy="274.5" r="2.7"/><circle cx="850.0" cy="273.7" r="2.4"/></g><g filter="url(#bl03)"><path d="M846.5 273.1h0.5v0.5h-0.5zM830.9 265.1h0.8v0.8h-0.8zM840.1 265.5h0.6v0.6h-0.6zM850.6 276.4h0.5v0.5h-0.5zM839.3 266.9h0.5v0.5h-0.5zM838.7 279.4h0.7v0.7h-0.7zM845.6 262.2h0.8v0.8h-0.8zM843.1 273.4h0.8v0.8h-0.8zM847.2 273.3h0.7v0.7h-0.7zM835.3 266.6h0.7v0.7h-0.7zM845.2 268.9h0.8v0.8h-0.8zM849.1 272.4h0.5v0.5h-0.5zM841.7 277.3h0.5v0.5h-0.5zM839.2 272.6h0.7v0.7h-0.7zM831.7 269.8h0.6v0.6h-0.6zM835.9 283.2h0.7v0.7h-0.7zM854.0 279.2h0.8v0.8h-0.8zM838.4 280.9h0.6v0.6h-0.6zM839.3 273.1h1.0v1.0h-1.0zM851.5 267.7h0.5v0.5h-0.5zM846.7 274.6h0.7v0.7h-0.7zM843.9 277.7h0.6v0.6h-0.6zM845.6 275.8h0.7v0.7h-0.7zM840.5 282.4h0.9v0.9h-0.9zM840.9 269.2h0.7v0.7h-0.7zM845.3 275.5h0.9v0.9h-0.9zM844.8 275.9h0.8v0.8h-0.8zM838.2 286.0h0.7v0.7h-0.7z" fill="#000" opacity="0.75"/><path d="M844.3 277.0h0.8v0.8h-0.8zM846.6 271.0h1.0v1.0h-1.0zM850.6 283.5h0.8v0.8h-0.8zM850.4 271.7h0.7v0.7h-0.7zM846.2 271.6h0.8v0.8h-0.8zM840.1 279.4h0.6v0.6h-0.6zM831.7 271.4h0.8v0.8h-0.8zM850.6 274.9h0.8v0.8h-0.8zM847.7 282.8h0.7v0.7h-0.7zM859.4 278.4h0.7v0.7h-0.7zM844.0 278.9h0.9v0.9h-0.9zM842.5 276.9h0.7v0.7h-0.7zM849.1 275.5h0.9v0.9h-0.9zM841.6 266.9h0.6v0.6h-0.6zM842.8 276.4h0.8v0.8h-0.8zM841.5 272.8h0.7v0.7h-0.7zM845.7 270.1h0.8v0.8h-0.8zM835.9 284.9h0.9v0.9h-0.9zM838.8 273.7h0.6v0.6h-0.6zM843.5 267.6h0.8v0.8h-0.8zM844.1 275.8h0.7v0.7h-0.7zM844.3 271.4h0.5v0.5h-0.5zM839.7 269.3h0.6v0.6h-0.6zM856.9 279.2h0.6v0.6h-0.6zM841.8 276.8h0.7v0.7h-0.7zM838.5 273.6h0.6v0.6h-0.6zM839.6 278.1h0.5v0.5h-0.5zM847.0 279.9h0.9v0.9h-0.9zM833.9 275.6h0.8v0.8h-0.8zM850.6 269.9h0.7v0.7h-0.7zM838.9 271.7h0.7v0.7h-0.7zM842.8 272.0h0.8v0.8h-0.8zM851.5 286.9h0.8v0.8h-0.8zM848.1 277.7h0.7v0.7h-0.7zM833.4 277.1h0.8v0.8h-0.8zM848.5 285.6h0.5v0.5h-0.5zM844.4 285.6h0.7v0.7h-0.7zM839.2 275.1h0.5v0.5h-0.5zM849.4 277.6h0.6v0.6h-0.6zM841.0 275.6h0.9v0.9h-0.9zM844.6 271.1h0.7v0.7h-0.7zM843.8 280.0h0.7v0.7h-0.7zM833.0 278.7h0.7v0.7h-0.7zM836.8 282.0h0.6v0.6h-0.6zM840.8 280.1h1.0v1.0h-1.0zM835.8 274.6h0.8v0.8h-0.8zM838.2 273.6h0.7v0.7h-0.7zM844.2 275.8h0.8v0.8h-0.8zM835.8 271.4h0.6v0.6h-0.6zM839.2 277.1h0.9v0.9h-0.9zM840.7 278.5h0.7v0.7h-0.7zM841.4 285.0h1.0v1.0h-1.0zM818.9 275.1h0.9v0.9h-0.9zM835.1 274.7h0.9v0.9h-0.9zM843.1 263.6h0.9v0.9h-0.9zM837.0 278.1h0.5v0.5h-0.5zM844.1 278.4h0.8v0.8h-0.8zM844.1 282.5h0.6v0.6h-0.6zM843.9 280.1h0.7v0.7h-0.7zM844.6 267.1h0.6v0.6h-0.6zM836.2 269.2h0.6v0.6h-0.6z" fill="#000" opacity="0.25"/><path d="M842.5 272.0h0.9v0.9h-0.9zM841.4 277.9h0.9v0.9h-0.9zM853.4 269.7h1.0v1.0h-1.0zM838.7 284.5h1.0v1.0h-1.0zM835.2 273.7h0.7v0.7h-0.7zM847.8 271.2h0.7v0.7h-0.7zM840.4 282.4h0.8v0.8h-0.8zM842.3 272.0h0.7v0.7h-0.7zM849.4 270.6h0.9v0.9h-0.9zM834.5 272.7h1.0v1.0h-1.0zM832.7 275.8h0.8v0.8h-0.8zM837.1 282.8h1.0v1.0h-1.0zM845.2 281.2h0.7v0.7h-0.7zM850.2 268.0h0.5v0.5h-0.5zM836.2 280.4h0.6v0.6h-0.6zM849.4 268.9h0.7v0.7h-0.7zM847.1 267.4h0.8v0.8h-0.8zM825.9 272.1h0.6v0.6h-0.6zM848.8 267.4h0.8v0.8h-0.8zM858.7 276.2h0.8v0.8h-0.8zM827.7 273.5h1.0v1.0h-1.0zM852.8 270.3h1.0v1.0h-1.0zM846.3 280.6h0.7v0.7h-0.7zM844.4 271.1h0.7v0.7h-0.7zM840.5 273.9h0.7v0.7h-0.7zM850.4 269.6h0.7v0.7h-0.7zM852.4 277.0h0.9v0.9h-0.9zM837.3 260.0h0.7v0.7h-0.7zM843.9 269.5h0.8v0.8h-0.8zM835.1 270.1h0.6v0.6h-0.6zM843.6 270.7h0.8v0.8h-0.8zM843.4 277.4h0.7v0.7h-0.7zM842.9 274.9h0.7v0.7h-0.7zM849.6 277.9h0.6v0.6h-0.6zM838.9 269.8h0.7v0.7h-0.7zM850.0 270.5h1.0v1.0h-1.0zM836.9 275.9h0.5v0.5h-0.5zM847.0 268.9h0.6v0.6h-0.6zM844.1 270.2h0.6v0.6h-0.6zM854.6 277.1h0.7v0.7h-0.7zM842.3 284.9h0.9v0.9h-0.9zM839.6 283.0h0.9v0.9h-0.9zM845.9 266.6h0.9v0.9h-0.9zM840.3 270.0h0.9v0.9h-0.9zM846.9 277.8h0.6v0.6h-0.6zM847.2 272.1h0.5v0.5h-0.5zM840.3 272.4h0.7v0.7h-0.7zM853.4 274.1h0.8v0.8h-0.8zM835.0 268.5h0.8v0.8h-0.8zM841.7 273.3h0.7v0.7h-0.7zM840.8 276.1h0.7v0.7h-0.7zM852.6 278.7h1.0v1.0h-1.0zM833.8 279.6h0.9v0.9h-0.9zM840.5 275.2h0.7v0.7h-0.7zM838.5 279.9h0.7v0.7h-0.7zM853.8 269.5h0.8v0.8h-0.8zM824.5 269.4h0.8v0.8h-0.8zM837.6 278.1h0.9v0.9h-0.9zM851.6 268.0h1.0v1.0h-1.0zM837.4 271.4h0.5v0.5h-0.5zM843.0 266.2h0.6v0.6h-0.6zM842.1 261.0h1.0v1.0h-1.0zM845.6 281.4h0.8v0.8h-0.8zM831.9 277.6h0.8v0.8h-0.8zM841.3 278.3h0.6v0.6h-0.6zM836.6 267.5h1.0v1.0h-1.0zM847.5 278.8h0.8v0.8h-0.8zM840.2 273.5h0.7v0.7h-0.7zM832.2 273.8h0.6v0.6h-0.6zM848.5 274.7h0.9v0.9h-0.9zM855.1 273.0h0.8v0.8h-0.8z" fill="#000" opacity="0.5"/></g><circle cx="877" cy="274" r="14.4" fill="#111"/><g fill="#fff"><circle cx="880.4" cy="280.8" r="2.8"/><circle cx="876.1" cy="266.9" r="2.6"/><circle cx="880.3" cy="263.5" r="2.2"/><circle cx="871.7" cy="282.9" r="2.6"/><circle cx="871.8" cy="273.5" r="2.8"/><circle cx="885.1" cy="270.3" r="2.7"/><circle cx="875.3" cy="278.2" r="2.4"/><circle cx="866.7" cy="268.9" r="2.3"/><circle cx="885.8" cy="278.0" r="2.5"/><circle cx="866.0" cy="275.8" r="2.7"/><circle cx="877.8" cy="273.0" r="2.5"/><circle cx="871.8" cy="263.6" r="2.3"/><circle cx="871.0" cy="278.4" r="1.5"/><circle cx="876.6" cy="284.4" r="1.9"/><circle cx="885.5" cy="283.2" r="1.5"/><circle cx="867.0" cy="280.9" r="1.6"/><circle cx="889.2" cy="274.3" r="1.6"/><circle cx="885.9" cy="265.2" r="1.7"/><circle cx="881.7" cy="285.6" r="1.6"/><circle cx="881.0" cy="275.8" r="1.1"/><circle cx="881.9" cy="273.2" r="0.9"/><circle cx="875.8" cy="262.5" r="1.1"/><circle cx="889.4" cy="270.7" r="1.2"/><circle cx="870.7" cy="269.1" r="0.9"/><circle cx="880.3" cy="268.5" r="1.3"/><circle cx="883.8" cy="262.8" r="1.0"/><circle cx="867.6" cy="264.8" r="1.0"/><circle cx="884.0" cy="274.3" r="1.0"/><circle cx="877.8" cy="261.3" r="0.6"/><circle cx="888.9" cy="268.2" r="0.8"/><circle cx="868.1" cy="272.6" r="0.6"/><circle cx="872.9" cy="269.3" r="0.7"/><circle cx="878.9" cy="276.8" r="0.7"/><circle cx="864.1" cy="271.6" r="0.7"/><circle cx="886.3" cy="274.1" r="0.8"/><circle cx="874.3" cy="286.9" r="0.9"/><circle cx="882.7" cy="266.7" r="0.7"/><circle cx="871.9" cy="267.5" r="0.6"/><circle cx="878.7" cy="286.9" r="0.9"/><circle cx="890.0" cy="277.6" r="0.8"/><circle cx="888.8" cy="280.3" r="0.8"/><circle cx="874.3" cy="270.4" r="0.6"/><circle cx="874.0" cy="261.0" r="0.7"/><circle cx="881.1" cy="270.9" r="0.8"/><circle cx="876.4" cy="287.6" r="0.6"/></g><g filter="url(#bl03)"><path d="M926.6 266.2h1.4v1.4h-1.4zM904.7 270.0h1.1v1.1h-1.1zM913.8 281.1h0.9v0.9h-0.9zM914.0 274.5h1.3v1.3h-1.3zM899.3 273.1h1.0v1.0h-1.0zM917.7 272.8h1.3v1.3h-1.3zM901.5 269.5h1.0v1.0h-1.0zM899.7 275.8h1.2v1.2h-1.2zM908.1 270.5h0.8v0.8h-0.8zM912.9 269.8h0.8v0.8h-0.8zM907.6 279.9h0.9v0.9h-0.9zM912.6 265.3h0.9v0.9h-0.9zM913.4 263.3h1.4v1.4h-1.4zM920.7 290.5h0.7v0.7h-0.7zM911.0 267.5h1.5v1.5h-1.5zM912.0 276.6h1.1v1.1h-1.1zM927.1 267.0h0.9v0.9h-0.9zM910.9 281.3h1.4v1.4h-1.4zM907.6 270.0h0.9v0.9h-0.9zM913.8 269.5h1.5v1.5h-1.5zM914.1 284.1h0.8v0.8h-0.8zM906.3 270.4h1.0v1.0h-1.0zM905.1 290.8h1.0v1.0h-1.0zM910.8 279.6h0.8v0.8h-0.8zM909.8 287.6h1.1v1.1h-1.1zM907.4 274.8h1.2v1.2h-1.2zM914.5 269.8h1.4v1.4h-1.4zM920.5 290.8h1.4v1.4h-1.4zM915.3 265.4h1.2v1.2h-1.2zM913.1 276.3h1.4v1.4h-1.4zM931.3 271.7h0.8v0.8h-0.8zM913.0 260.9h0.7v0.7h-0.7zM909.0 262.4h1.1v1.1h-1.1zM908.9 275.3h1.0v1.0h-1.0zM915.2 265.6h1.0v1.0h-1.0zM906.7 283.6h1.1v1.1h-1.1zM921.5 272.8h1.0v1.0h-1.0zM914.9 268.1h1.0v1.0h-1.0zM908.3 263.9h0.9v0.9h-0.9zM911.0 264.4h1.1v1.1h-1.1zM899.6 289.8h0.9v0.9h-0.9zM902.0 274.4h1.3v1.3h-1.3zM921.4 282.4h0.8v0.8h-0.8zM910.7 271.3h1.4v1.4h-1.4zM911.5 276.4h1.2v1.2h-1.2zM917.0 280.0h1.0v1.0h-1.0zM890.4 273.9h1.3v1.3h-1.3zM908.7 274.8h1.4v1.4h-1.4zM910.4 266.2h1.3v1.3h-1.3zM918.9 264.6h1.3v1.3h-1.3zM920.6 270.8h1.4v1.4h-1.4zM901.4 280.7h1.2v1.2h-1.2zM908.8 277.4h0.7v0.7h-0.7zM910.1 276.7h1.1v1.1h-1.1zM910.4 277.4h1.2v1.2h-1.2zM918.5 273.3h1.4v1.4h-1.4zM919.4 279.5h1.3v1.3h-1.3zM912.4 272.2h1.0v1.0h-1.0zM911.9 270.6h0.7v0.7h-0.7zM916.7 279.0h1.4v1.4h-1.4zM923.0 267.0h1.1v1.1h-1.1zM900.6 267.8h1.3v1.3h-1.3zM906.6 273.4h1.2v1.2h-1.2zM911.9 270.6h0.9v0.9h-0.9zM916.8 286.0h0.9v0.9h-0.9zM907.1 269.6h0.9v0.9h-0.9zM913.1 278.1h1.4v1.4h-1.4zM902.9 282.3h0.7v0.7h-0.7zM907.2 281.2h1.2v1.2h-1.2zM914.8 269.9h1.3v1.3h-1.3zM914.9 276.6h0.8v0.8h-0.8zM902.4 274.2h1.3v1.3h-1.3zM901.1 264.4h0.7v0.7h-0.7zM918.4 263.2h1.1v1.1h-1.1zM914.8 261.0h1.3v1.3h-1.3zM911.9 279.1h1.4v1.4h-1.4zM912.2 281.3h0.8v0.8h-0.8zM908.9 273.1h0.9v0.9h-0.9zM912.6 269.9h1.3v1.3h-1.3zM910.5 257.8h0.9v0.9h-0.9zM903.3 285.7h1.3v1.3h-1.3zM917.3 283.5h0.7v0.7h-0.7zM905.9 272.8h0.9v0.9h-0.9zM914.1 267.0h1.1v1.1h-1.1zM914.0 282.1h1.0v1.0h-1.0zM914.8 272.6h0.9v0.9h-0.9zM907.7 281.4h1.4v1.4h-1.4zM907.4 271.3h1.2v1.2h-1.2zM920.8 280.2h0.8v0.8h-0.8zM911.8 263.3h0.8v0.8h-0.8zM905.3 270.4h1.3v1.3h-1.3zM898.9 288.0h0.8v0.8h-0.8zM910.1 269.3h1.2v1.2h-1.2zM906.3 269.8h1.5v1.5h-1.5zM906.5 267.0h1.0v1.0h-1.0zM907.7 267.2h0.8v0.8h-0.8zM913.2 274.7h1.0v1.0h-1.0zM906.4 275.3h0.9v0.9h-0.9zM917.3 262.0h0.7v0.7h-0.7zM912.8 267.3h1.4v1.4h-1.4zM910.4 276.0h1.1v1.1h-1.1zM919.0 274.9h0.9v0.9h-0.9zM911.1 282.7h0.9v0.9h-0.9zM911.8 267.8h1.5v1.5h-1.5zM914.8 269.0h1.4v1.4h-1.4zM913.7 271.3h1.0v1.0h-1.0zM913.9 260.3h0.8v0.8h-0.8zM912.2 276.3h0.8v0.8h-0.8zM911.4 267.7h1.0v1.0h-1.0zM917.2 260.8h1.4v1.4h-1.4zM905.3 268.4h1.2v1.2h-1.2zM914.8 269.2h1.1v1.1h-1.1zM925.0 279.2h1.0v1.0h-1.0zM901.2 275.0h0.9v0.9h-0.9zM918.0 269.3h1.2v1.2h-1.2zM908.9 274.0h1.4v1.4h-1.4zM909.5 281.6h0.9v0.9h-0.9zM916.0 275.6h0.8v0.8h-0.8zM908.8 272.9h0.9v0.9h-0.9zM902.4 257.6h1.4v1.4h-1.4zM909.2 280.4h0.8v0.8h-0.8zM917.9 281.4h0.7v0.7h-0.7zM908.3 279.7h0.9v0.9h-0.9zM902.1 273.3h0.9v0.9h-0.9zM914.4 266.0h1.2v1.2h-1.2zM921.7 279.2h1.3v1.3h-1.3zM907.0 283.8h1.3v1.3h-1.3zM915.2 279.4h1.4v1.4h-1.4zM908.5 274.6h1.2v1.2h-1.2zM895.6 279.8h1.1v1.1h-1.1zM911.5 274.4h1.0v1.0h-1.0zM917.2 273.0h0.9v0.9h-0.9zM908.3 273.5h1.4v1.4h-1.4zM917.3 282.2h0.8v0.8h-0.8zM922.8 275.3h1.3v1.3h-1.3zM919.0 284.5h1.2v1.2h-1.2zM897.8 282.6h0.9v0.9h-0.9zM900.4 276.1h0.8v0.8h-0.8zM898.6 270.6h1.1v1.1h-1.1zM911.3 265.7h0.8v0.8h-0.8zM900.9 287.1h0.9v0.9h-0.9zM923.9 274.2h1.4v1.4h-1.4zM912.7 278.6h0.8v0.8h-0.8zM908.5 274.0h0.9v0.9h-0.9zM922.2 271.1h0.8v0.8h-0.8zM902.1 278.6h1.5v1.5h-1.5zM906.3 278.2h0.8v0.8h-0.8zM900.5 259.7h1.3v1.3h-1.3zM931.2 268.1h1.1v1.1h-1.1zM920.3 263.3h1.1v1.1h-1.1zM902.4 275.1h0.9v0.9h-0.9zM909.6 274.2h1.2v1.2h-1.2zM908.7 273.1h0.8v0.8h-0.8zM923.9 263.8h1.0v1.0h-1.0zM907.1 270.1h1.2v1.2h-1.2zM905.1 283.2h0.8v0.8h-0.8zM908.8 293.8h1.4v1.4h-1.4zM912.6 280.3h0.9v0.9h-0.9zM906.7 271.5h1.0v1.0h-1.0zM917.6 270.8h0.8v0.8h-0.8zM914.5 272.5h1.0v1.0h-1.0zM898.8 273.7h1.3v1.3h-1.3zM914.4 269.8h1.0v1.0h-1.0zM906.3 289.3h1.3v1.3h-1.3zM904.4 273.3h1.0v1.0h-1.0zM905.6 270.0h1.2v1.2h-1.2zM903.3 273.2h1.2v1.2h-1.2zM913.1 265.7h0.9v0.9h-0.9zM911.5 273.0h1.2v1.2h-1.2zM900.7 289.2h0.8v0.8h-0.8zM917.9 274.5h0.8v0.8h-0.8zM917.9 279.9h1.1v1.1h-1.1zM911.3 274.2h1.4v1.4h-1.4zM919.4 256.4h0.9v0.9h-0.9zM903.8 266.9h1.5v1.5h-1.5zM901.4 273.4h0.8v0.8h-0.8zM911.2 282.8h1.3v1.3h-1.3zM916.2 269.7h1.0v1.0h-1.0zM923.1 263.2h0.7v0.7h-0.7zM897.2 288.6h1.2v1.2h-1.2zM913.3 281.6h1.2v1.2h-1.2zM910.4 273.4h0.9v0.9h-0.9zM904.3 268.7h1.4v1.4h-1.4zM895.7 278.1h1.1v1.1h-1.1zM909.6 272.8h1.1v1.1h-1.1zM919.8 274.1h1.0v1.0h-1.0zM916.1 285.7h0.8v0.8h-0.8zM903.6 287.7h1.1v1.1h-1.1zM898.8 281.1h1.4v1.4h-1.4zM890.6 268.5h1.3v1.3h-1.3zM912.0 260.2h0.8v0.8h-0.8zM920.3 274.2h0.7v0.7h-0.7zM906.8 273.1h1.1v1.1h-1.1z" fill="#000" opacity="0.5"/><path d="M913.0 264.9h1.2v1.2h-1.2zM916.6 275.4h1.2v1.2h-1.2zM906.7 273.2h1.1v1.1h-1.1zM908.2 267.3h1.3v1.3h-1.3zM912.2 265.1h1.1v1.1h-1.1zM918.9 280.2h1.0v1.0h-1.0zM902.7 270.7h0.9v0.9h-0.9zM901.9 282.6h0.8v0.8h-0.8zM908.4 275.4h1.3v1.3h-1.3zM907.6 265.9h1.1v1.1h-1.1zM916.5 267.8h1.3v1.3h-1.3zM899.4 280.2h1.1v1.1h-1.1zM921.2 272.9h0.7v0.7h-0.7zM909.9 280.6h0.8v0.8h-0.8zM920.9 280.2h1.0v1.0h-1.0zM910.2 276.7h1.4v1.4h-1.4zM920.8 275.2h0.8v0.8h-0.8zM899.9 276.1h1.2v1.2h-1.2zM905.4 276.7h1.2v1.2h-1.2zM915.9 268.2h1.0v1.0h-1.0zM915.1 265.8h1.5v1.5h-1.5zM918.0 275.5h1.5v1.5h-1.5zM908.9 272.5h1.2v1.2h-1.2zM907.5 273.1h0.8v0.8h-0.8zM917.3 281.9h0.9v0.9h-0.9zM912.5 273.7h1.3v1.3h-1.3zM914.2 263.3h1.5v1.5h-1.5zM902.1 262.6h0.9v0.9h-0.9zM911.1 274.0h1.3v1.3h-1.3zM902.5 270.2h1.3v1.3h-1.3zM919.2 283.6h1.0v1.0h-1.0zM895.5 272.8h1.0v1.0h-1.0zM916.6 277.1h1.2v1.2h-1.2zM913.4 269.8h1.3v1.3h-1.3zM905.3 269.2h1.1v1.1h-1.1zM915.3 261.3h0.9v0.9h-0.9zM911.1 280.7h1.4v1.4h-1.4zM892.6 262.2h1.3v1.3h-1.3zM916.3 281.4h1.2v1.2h-1.2zM917.4 278.1h1.1v1.1h-1.1zM902.2 279.9h1.0v1.0h-1.0zM922.2 268.5h1.2v1.2h-1.2zM915.1 273.6h1.3v1.3h-1.3zM910.3 267.7h1.1v1.1h-1.1zM919.6 280.2h1.0v1.0h-1.0zM910.9 266.3h1.3v1.3h-1.3zM918.3 264.5h1.4v1.4h-1.4zM909.3 282.1h1.3v1.3h-1.3zM909.3 260.6h1.4v1.4h-1.4zM909.6 272.4h1.1v1.1h-1.1zM918.4 274.1h1.5v1.5h-1.5zM913.0 276.3h1.4v1.4h-1.4zM921.2 276.9h0.7v0.7h-0.7zM907.3 282.5h0.7v0.7h-0.7zM919.8 271.6h1.2v1.2h-1.2zM920.9 272.5h0.9v0.9h-0.9zM915.9 268.9h1.2v1.2h-1.2zM915.2 271.2h0.8v0.8h-0.8zM895.4 277.9h1.2v1.2h-1.2zM910.1 269.6h1.3v1.3h-1.3zM903.7 270.8h1.4v1.4h-1.4zM912.3 278.0h0.7v0.7h-0.7zM912.4 267.4h0.9v0.9h-0.9zM909.0 269.1h1.0v1.0h-1.0zM909.5 266.7h1.2v1.2h-1.2zM911.5 275.1h0.8v0.8h-0.8zM910.0 267.1h1.4v1.4h-1.4zM913.5 268.0h1.0v1.0h-1.0zM908.8 278.6h0.8v0.8h-0.8zM915.2 279.1h0.7v0.7h-0.7zM910.2 279.1h0.7v0.7h-0.7zM910.3 277.4h0.9v0.9h-0.9zM899.3 274.7h1.4v1.4h-1.4zM919.2 267.0h1.0v1.0h-1.0zM911.6 262.8h0.9v0.9h-0.9zM914.4 261.1h1.0v1.0h-1.0zM911.8 280.8h1.1v1.1h-1.1zM906.7 273.8h1.2v1.2h-1.2zM903.3 272.8h1.4v1.4h-1.4zM909.6 279.3h1.1v1.1h-1.1zM906.4 269.1h1.5v1.5h-1.5zM920.3 270.3h1.0v1.0h-1.0zM903.2 272.3h0.8v0.8h-0.8zM916.2 273.1h1.2v1.2h-1.2zM908.6 281.0h1.4v1.4h-1.4zM919.1 276.6h0.9v0.9h-0.9zM919.4 276.0h1.3v1.3h-1.3zM922.5 273.0h0.8v0.8h-0.8zM920.1 270.8h1.1v1.1h-1.1zM911.1 269.6h1.3v1.3h-1.3zM914.7 279.0h1.5v1.5h-1.5zM902.8 277.2h1.2v1.2h-1.2zM897.4 277.7h0.7v0.7h-0.7zM918.2 281.4h0.9v0.9h-0.9zM916.0 261.2h1.0v1.0h-1.0zM914.8 264.6h1.2v1.2h-1.2zM915.9 274.7h0.8v0.8h-0.8zM905.6 278.5h1.1v1.1h-1.1zM916.6 285.0h1.2v1.2h-1.2zM907.5 278.6h1.2v1.2h-1.2zM907.5 271.6h1.1v1.1h-1.1zM908.1 269.6h0.9v0.9h-0.9zM908.4 282.4h1.1v1.1h-1.1zM912.8 270.0h1.3v1.3h-1.3zM918.6 264.0h1.3v1.3h-1.3zM911.0 275.8h0.8v0.8h-0.8zM919.3 269.9h1.2v1.2h-1.2zM917.1 268.8h1.1v1.1h-1.1zM916.4 263.6h1.4v1.4h-1.4zM912.1 273.5h1.3v1.3h-1.3zM924.8 270.5h1.1v1.1h-1.1zM915.2 277.1h1.5v1.5h-1.5zM908.9 281.3h1.5v1.5h-1.5zM907.4 281.8h0.8v0.8h-0.8zM916.2 269.7h0.9v0.9h-0.9zM918.9 268.1h1.1v1.1h-1.1zM898.1 275.0h1.3v1.3h-1.3zM899.9 273.9h1.1v1.1h-1.1zM905.8 261.9h1.5v1.5h-1.5zM908.7 267.1h1.4v1.4h-1.4zM912.0 264.8h1.3v1.3h-1.3zM905.0 278.8h1.2v1.2h-1.2zM905.3 270.4h1.1v1.1h-1.1zM929.4 274.3h1.0v1.0h-1.0zM901.6 268.2h0.8v0.8h-0.8zM912.3 253.1h1.3v1.3h-1.3zM911.7 273.1h1.3v1.3h-1.3zM911.4 278.6h1.4v1.4h-1.4zM898.2 282.4h1.1v1.1h-1.1zM913.3 289.2h0.9v0.9h-0.9zM927.2 269.7h0.8v0.8h-0.8zM912.3 275.1h0.9v0.9h-0.9zM908.3 280.6h1.3v1.3h-1.3zM911.8 288.4h1.0v1.0h-1.0zM903.3 283.1h1.2v1.2h-1.2zM912.3 276.5h0.9v0.9h-0.9zM897.3 273.7h1.2v1.2h-1.2zM911.2 272.2h0.8v0.8h-0.8zM900.1 272.8h1.2v1.2h-1.2zM911.0 278.4h0.9v0.9h-0.9zM910.0 261.7h1.1v1.1h-1.1zM903.2 275.4h0.9v0.9h-0.9zM904.0 258.6h0.8v0.8h-0.8zM915.4 273.0h0.8v0.8h-0.8zM915.0 282.7h0.8v0.8h-0.8zM909.2 284.1h1.1v1.1h-1.1zM906.7 270.5h1.1v1.1h-1.1zM906.7 277.0h1.2v1.2h-1.2zM909.5 270.6h1.0v1.0h-1.0zM912.4 277.0h1.0v1.0h-1.0zM900.8 284.0h1.3v1.3h-1.3zM918.4 276.7h1.2v1.2h-1.2zM909.4 278.9h0.9v0.9h-0.9zM903.7 274.8h1.2v1.2h-1.2zM911.6 285.2h0.8v0.8h-0.8zM915.2 267.4h1.3v1.3h-1.3zM925.0 261.5h1.2v1.2h-1.2zM907.2 261.4h1.0v1.0h-1.0zM908.1 274.4h0.9v0.9h-0.9zM908.8 275.1h1.0v1.0h-1.0zM906.3 282.4h0.7v0.7h-0.7zM910.5 277.6h1.4v1.4h-1.4z" fill="#000" opacity="0.75"/><path d="M895.5 269.6h1.2v1.2h-1.2zM924.0 275.9h1.2v1.2h-1.2zM916.9 257.9h1.1v1.1h-1.1zM902.6 286.3h1.4v1.4h-1.4zM906.4 288.3h0.8v0.8h-0.8zM910.5 258.1h0.9v0.9h-0.9zM905.6 268.8h1.2v1.2h-1.2zM914.4 271.7h1.3v1.3h-1.3zM909.2 271.0h1.4v1.4h-1.4zM905.3 273.6h1.2v1.2h-1.2zM913.5 277.0h1.2v1.2h-1.2zM902.2 272.8h1.2v1.2h-1.2zM916.1 264.0h1.5v1.5h-1.5zM909.7 262.0h1.2v1.2h-1.2zM908.4 282.2h1.1v1.1h-1.1zM904.4 266.6h1.2v1.2h-1.2zM928.4 265.6h1.2v1.2h-1.2zM917.8 267.6h0.8v0.8h-0.8zM920.6 267.4h1.5v1.5h-1.5zM901.0 276.6h1.5v1.5h-1.5zM904.6 284.0h1.4v1.4h-1.4zM913.1 264.8h1.0v1.0h-1.0zM909.9 273.0h1.0v1.0h-1.0zM909.0 272.0h1.5v1.5h-1.5zM903.3 262.9h1.1v1.1h-1.1zM912.1 274.4h1.1v1.1h-1.1zM904.7 272.4h0.7v0.7h-0.7zM908.9 274.6h0.9v0.9h-0.9zM911.2 275.4h0.9v0.9h-0.9zM920.4 285.5h0.7v0.7h-0.7zM910.1 265.4h1.0v1.0h-1.0zM917.6 283.5h1.4v1.4h-1.4zM902.0 273.5h1.0v1.0h-1.0zM913.9 282.7h0.7v0.7h-0.7zM909.2 268.9h0.7v0.7h-0.7zM912.7 276.5h1.0v1.0h-1.0zM898.1 283.0h1.3v1.3h-1.3zM918.1 274.2h1.4v1.4h-1.4zM903.0 277.3h1.1v1.1h-1.1zM904.8 274.1h0.9v0.9h-0.9zM928.9 274.3h1.2v1.2h-1.2zM922.3 276.3h0.7v0.7h-0.7zM909.7 286.0h0.9v0.9h-0.9zM904.4 274.2h1.5v1.5h-1.5zM920.0 277.0h1.4v1.4h-1.4zM906.2 275.1h1.0v1.0h-1.0zM915.3 282.7h1.3v1.3h-1.3zM910.3 268.5h1.3v1.3h-1.3zM922.9 270.4h1.0v1.0h-1.0z" fill="#000" opacity="1.0"/><path d="M903.3 275.4h1.3v1.3h-1.3zM915.9 281.5h0.9v0.9h-0.9zM917.8 286.8h1.5v1.5h-1.5zM918.9 267.3h0.9v0.9h-0.9zM906.2 272.8h1.3v1.3h-1.3zM921.8 281.1h1.4v1.4h-1.4zM908.3 268.3h1.4v1.4h-1.4zM911.0 261.3h1.3v1.3h-1.3zM914.7 278.7h0.8v0.8h-0.8zM907.1 262.5h0.8v0.8h-0.8zM902.7 273.1h1.1v1.1h-1.1zM916.2 280.8h0.9v0.9h-0.9zM918.9 277.7h0.8v0.8h-0.8zM914.1 268.6h1.3v1.3h-1.3zM903.7 278.6h1.1v1.1h-1.1zM912.4 279.8h1.4v1.4h-1.4z" fill="#000" opacity="0.25"/></g><g filter="url(#bl03)"><path d="M941.4 260.5h1.0v1.0h-1.0zM948.7 284.8h0.9v0.9h-0.9zM951.4 283.3h1.5v1.5h-1.5zM939.8 287.0h0.9v0.9h-0.9zM935.7 270.9h1.6v1.6h-1.6zM937.6 262.0h1.5v1.5h-1.5zM949.1 267.5h1.5v1.5h-1.5zM932.5 277.6h0.8v0.8h-0.8zM941.9 281.3h1.6v1.6h-1.6zM941.0 264.5h1.4v1.4h-1.4zM957.2 277.6h0.8v0.8h-0.8zM933.1 269.3h0.8v0.8h-0.8zM938.6 265.6h1.7v1.7h-1.7zM954.2 284.0h1.1v1.1h-1.1zM944.0 277.1h1.0v1.0h-1.0zM935.2 269.5h1.1v1.1h-1.1zM952.5 269.8h1.0v1.0h-1.0zM957.8 270.7h1.1v1.1h-1.1zM931.6 277.9h0.9v0.9h-0.9zM933.0 271.2h1.5v1.5h-1.5zM950.0 286.8h1.0v1.0h-1.0zM946.2 268.3h0.8v0.8h-0.8zM944.0 277.2h1.6v1.6h-1.6zM952.6 261.5h1.7v1.7h-1.7zM949.0 279.5h1.7v1.7h-1.7zM956.4 266.5h1.6v1.6h-1.6zM933.0 265.6h1.0v1.0h-1.0zM942.3 265.0h1.1v1.1h-1.1zM938.9 263.6h1.7v1.7h-1.7zM941.8 259.2h1.1v1.1h-1.1zM955.4 264.0h1.1v1.1h-1.1zM956.1 270.4h1.0v1.0h-1.0zM950.3 274.7h1.1v1.1h-1.1zM948.5 265.5h1.6v1.6h-1.6zM952.9 284.6h1.2v1.2h-1.2zM937.5 278.6h1.0v1.0h-1.0zM951.6 277.4h1.1v1.1h-1.1zM942.7 263.6h0.9v0.9h-0.9zM938.0 263.6h1.0v1.0h-1.0zM954.5 264.4h1.2v1.2h-1.2zM958.8 272.8h1.3v1.3h-1.3zM957.0 277.1h1.6v1.6h-1.6zM954.1 276.4h1.4v1.4h-1.4zM951.4 279.7h1.1v1.1h-1.1zM930.4 274.0h1.6v1.6h-1.6zM945.2 283.6h1.1v1.1h-1.1zM950.9 262.4h1.2v1.2h-1.2zM941.8 281.9h1.6v1.6h-1.6zM952.3 270.6h1.5v1.5h-1.5zM942.1 264.9h1.6v1.6h-1.6zM953.9 276.0h1.7v1.7h-1.7zM947.0 285.7h1.2v1.2h-1.2zM936.6 270.5h1.6v1.6h-1.6zM930.4 276.4h1.5v1.5h-1.5zM936.3 283.9h0.9v0.9h-0.9zM936.3 278.5h0.9v0.9h-0.9zM939.7 260.5h1.2v1.2h-1.2zM953.4 276.6h1.4v1.4h-1.4zM933.7 267.5h1.2v1.2h-1.2zM945.5 283.6h1.1v1.1h-1.1zM956.4 277.7h0.9v0.9h-0.9zM955.9 277.4h1.4v1.4h-1.4zM951.7 261.1h1.1v1.1h-1.1zM955.3 271.8h1.6v1.6h-1.6zM936.3 284.1h1.6v1.6h-1.6zM933.0 271.5h1.6v1.6h-1.6zM944.4 282.8h1.5v1.5h-1.5zM955.0 268.2h0.9v0.9h-0.9zM947.7 275.1h1.0v1.0h-1.0zM953.4 269.7h0.8v0.8h-0.8zM941.6 266.6h1.0v1.0h-1.0zM940.3 275.0h1.2v1.2h-1.2zM942.9 265.9h1.0v1.0h-1.0zM950.8 264.8h1.3v1.3h-1.3zM933.1 265.4h1.5v1.5h-1.5zM951.5 268.4h1.5v1.5h-1.5zM935.9 267.9h1.2v1.2h-1.2zM941.2 267.4h0.9v0.9h-0.9zM933.2 272.2h1.7v1.7h-1.7zM952.4 279.9h1.2v1.2h-1.2zM952.1 264.4h0.9v0.9h-0.9zM939.6 275.1h1.1v1.1h-1.1zM940.2 267.4h1.0v1.0h-1.0zM930.8 276.6h1.6v1.6h-1.6zM943.7 285.8h1.6v1.6h-1.6zM956.0 274.5h0.8v0.8h-0.8zM945.1 262.9h1.1v1.1h-1.1zM952.5 277.1h1.6v1.6h-1.6zM931.9 269.9h1.1v1.1h-1.1zM950.5 262.9h1.2v1.2h-1.2zM949.8 267.9h1.5v1.5h-1.5zM938.9 264.0h1.4v1.4h-1.4zM939.3 263.7h1.2v1.2h-1.2zM941.8 272.0h1.1v1.1h-1.1zM945.7 276.7h1.2v1.2h-1.2zM953.8 263.1h0.9v0.9h-0.9zM947.9 276.2h1.5v1.5h-1.5zM951.6 277.3h1.5v1.5h-1.5zM940.4 275.8h1.4v1.4h-1.4zM942.0 279.9h1.5v1.5h-1.5zM942.5 263.4h1.2v1.2h-1.2zM947.4 274.5h0.9v0.9h-0.9zM948.5 277.0h1.5v1.5h-1.5zM936.3 263.6h1.3v1.3h-1.3zM938.4 285.1h1.2v1.2h-1.2zM946.9 281.1h1.5v1.5h-1.5zM948.0 274.8h1.6v1.6h-1.6zM951.3 285.6h1.1v1.1h-1.1zM932.9 275.0h1.2v1.2h-1.2zM932.7 279.6h1.0v1.0h-1.0zM951.6 266.5h0.8v0.8h-0.8z" fill="#000" opacity="1.0"/><path d="M931.5 278.0h1.7v1.7h-1.7zM939.0 286.2h0.9v0.9h-0.9zM953.1 279.2h0.9v0.9h-0.9zM932.3 274.7h1.7v1.7h-1.7zM931.4 276.1h1.0v1.0h-1.0zM935.6 268.9h1.6v1.6h-1.6zM949.8 269.4h1.2v1.2h-1.2zM945.8 269.0h1.0v1.0h-1.0zM948.7 266.1h1.0v1.0h-1.0zM944.0 261.8h1.7v1.7h-1.7zM942.4 268.2h0.8v0.8h-0.8zM949.6 262.1h1.0v1.0h-1.0zM940.0 284.5h1.5v1.5h-1.5zM954.4 270.4h1.1v1.1h-1.1zM949.9 263.7h1.1v1.1h-1.1zM941.0 261.9h1.0v1.0h-1.0zM951.3 282.1h1.6v1.6h-1.6zM946.0 259.3h1.0v1.0h-1.0zM932.0 275.6h1.4v1.4h-1.4zM937.8 264.7h1.5v1.5h-1.5zM946.8 259.7h1.3v1.3h-1.3zM933.9 263.4h1.5v1.5h-1.5zM948.6 283.3h1.1v1.1h-1.1zM945.6 268.0h1.1v1.1h-1.1zM936.7 266.8h0.9v0.9h-0.9zM936.6 267.8h1.2v1.2h-1.2zM936.0 269.0h1.2v1.2h-1.2zM934.3 267.2h1.4v1.4h-1.4zM953.6 264.6h1.6v1.6h-1.6zM937.4 274.8h0.9v0.9h-0.9zM943.7 287.4h0.9v0.9h-0.9zM951.5 276.4h1.5v1.5h-1.5zM936.6 277.6h0.9v0.9h-0.9zM955.1 269.6h1.2v1.2h-1.2zM941.6 266.7h1.5v1.5h-1.5zM936.2 269.5h1.5v1.5h-1.5zM945.2 274.6h1.4v1.4h-1.4zM937.5 285.3h0.9v0.9h-0.9zM938.0 266.8h1.4v1.4h-1.4zM933.0 274.5h1.2v1.2h-1.2zM933.6 264.6h0.9v0.9h-0.9zM937.9 265.4h1.6v1.6h-1.6zM954.6 269.1h1.0v1.0h-1.0zM938.7 267.9h0.9v0.9h-0.9zM948.8 267.6h1.0v1.0h-1.0zM931.2 276.7h1.7v1.7h-1.7zM942.3 280.5h1.2v1.2h-1.2zM948.3 281.9h0.9v0.9h-0.9zM952.0 284.1h0.9v0.9h-0.9zM946.8 270.0h0.8v0.8h-0.8zM951.3 276.8h1.1v1.1h-1.1zM931.9 265.6h1.5v1.5h-1.5zM937.2 285.8h1.5v1.5h-1.5zM930.3 273.0h1.2v1.2h-1.2zM949.6 273.2h0.9v0.9h-0.9zM936.0 285.0h1.2v1.2h-1.2zM944.5 287.4h1.6v1.6h-1.6zM931.8 276.2h1.0v1.0h-1.0zM953.5 278.5h1.3v1.3h-1.3zM934.0 278.0h1.6v1.6h-1.6zM942.7 269.1h1.5v1.5h-1.5zM941.7 279.2h1.6v1.6h-1.6zM932.7 265.3h1.6v1.6h-1.6zM936.1 267.0h1.3v1.3h-1.3zM948.3 274.6h0.8v0.8h-0.8zM932.6 265.5h1.3v1.3h-1.3zM931.8 278.4h1.4v1.4h-1.4zM951.3 268.3h1.6v1.6h-1.6zM956.2 276.9h1.5v1.5h-1.5zM941.2 274.8h0.9v0.9h-0.9zM938.2 277.5h0.9v0.9h-0.9zM934.0 268.5h1.6v1.6h-1.6zM940.3 264.6h1.1v1.1h-1.1zM946.0 278.4h1.7v1.7h-1.7zM934.0 274.1h1.1v1.1h-1.1zM949.5 283.3h0.8v0.8h-0.8zM939.8 279.1h1.3v1.3h-1.3zM952.7 273.3h1.2v1.2h-1.2zM953.8 262.5h1.4v1.4h-1.4zM952.0 284.8h1.5v1.5h-1.5zM945.9 281.9h0.9v0.9h-0.9zM955.0 269.9h1.5v1.5h-1.5zM939.9 285.2h0.9v0.9h-0.9zM941.6 274.3h0.8v0.8h-0.8zM933.6 267.2h1.1v1.1h-1.1zM942.8 271.5h1.2v1.2h-1.2zM932.7 278.9h1.3v1.3h-1.3zM932.7 271.9h1.2v1.2h-1.2zM949.5 267.4h1.7v1.7h-1.7zM946.2 266.6h1.4v1.4h-1.4zM958.6 275.4h1.6v1.6h-1.6zM939.5 260.7h1.1v1.1h-1.1zM932.4 280.0h1.1v1.1h-1.1zM942.6 272.3h1.2v1.2h-1.2zM942.4 262.6h1.1v1.1h-1.1zM932.9 266.7h1.6v1.6h-1.6zM933.5 270.8h0.9v0.9h-0.9zM949.9 264.8h1.4v1.4h-1.4zM947.3 261.3h1.0v1.0h-1.0zM951.2 281.6h1.2v1.2h-1.2zM953.0 278.3h1.3v1.3h-1.3zM934.6 267.0h1.0v1.0h-1.0z" fill="#000" opacity="0.5"/><path d="M930.1 271.8h1.5v1.5h-1.5zM947.7 268.6h1.1v1.1h-1.1zM929.7 272.8h1.5v1.5h-1.5zM945.0 285.1h1.0v1.0h-1.0zM938.8 265.9h1.5v1.5h-1.5zM942.0 275.9h1.2v1.2h-1.2zM941.2 260.6h1.3v1.3h-1.3zM936.8 278.4h1.0v1.0h-1.0zM943.3 272.0h1.0v1.0h-1.0zM943.3 282.2h1.5v1.5h-1.5zM942.9 264.5h0.8v0.8h-0.8zM956.0 278.6h1.6v1.6h-1.6zM940.1 273.1h1.5v1.5h-1.5zM942.2 266.2h1.4v1.4h-1.4zM945.8 284.9h1.0v1.0h-1.0zM940.8 279.4h1.7v1.7h-1.7zM951.0 270.7h1.4v1.4h-1.4zM931.2 278.3h1.1v1.1h-1.1zM938.0 270.7h0.9v0.9h-0.9zM954.2 281.9h1.6v1.6h-1.6zM935.1 265.6h0.9v0.9h-0.9zM943.4 273.5h1.3v1.3h-1.3zM954.0 270.6h1.6v1.6h-1.6zM949.3 266.3h0.9v0.9h-0.9zM953.3 281.0h1.0v1.0h-1.0zM931.8 280.4h1.0v1.0h-1.0zM941.7 275.8h1.3v1.3h-1.3zM942.0 285.1h1.3v1.3h-1.3zM935.0 283.2h1.5v1.5h-1.5zM948.4 277.5h1.4v1.4h-1.4zM946.3 286.8h1.2v1.2h-1.2zM944.1 261.9h1.4v1.4h-1.4zM942.6 285.8h0.9v0.9h-0.9zM933.7 263.4h1.7v1.7h-1.7zM930.9 271.6h1.1v1.1h-1.1zM957.2 274.2h0.9v0.9h-0.9zM942.7 271.6h1.0v1.0h-1.0zM934.6 268.3h0.9v0.9h-0.9zM931.7 272.2h1.4v1.4h-1.4zM950.9 280.4h1.7v1.7h-1.7zM951.0 283.3h0.8v0.8h-0.8zM945.9 285.5h1.6v1.6h-1.6zM944.9 283.2h1.0v1.0h-1.0zM951.2 267.1h0.8v0.8h-0.8zM941.8 277.8h1.6v1.6h-1.6zM948.1 279.8h1.7v1.7h-1.7zM953.6 277.0h1.2v1.2h-1.2zM951.4 261.7h0.9v0.9h-0.9zM949.4 279.6h1.1v1.1h-1.1zM949.8 265.6h0.9v0.9h-0.9zM933.8 264.8h1.0v1.0h-1.0zM941.8 259.1h1.6v1.6h-1.6zM939.7 267.4h0.9v0.9h-0.9zM951.3 282.4h1.7v1.7h-1.7zM945.7 271.6h1.0v1.0h-1.0zM941.9 267.3h1.7v1.7h-1.7zM942.6 272.0h1.5v1.5h-1.5zM957.9 274.0h1.1v1.1h-1.1zM950.1 278.0h0.8v0.8h-0.8zM932.2 265.3h1.5v1.5h-1.5zM949.3 287.0h1.1v1.1h-1.1zM952.2 264.4h1.2v1.2h-1.2zM943.7 264.4h1.3v1.3h-1.3zM941.2 268.4h0.9v0.9h-0.9zM935.7 267.5h1.4v1.4h-1.4zM943.3 276.9h1.4v1.4h-1.4zM955.7 278.4h1.7v1.7h-1.7zM949.9 283.1h1.6v1.6h-1.6zM943.5 266.9h1.0v1.0h-1.0zM943.9 285.0h1.4v1.4h-1.4zM943.9 274.6h1.0v1.0h-1.0zM942.9 265.7h1.0v1.0h-1.0zM941.0 283.9h1.3v1.3h-1.3zM954.7 280.3h1.7v1.7h-1.7zM947.0 269.0h0.9v0.9h-0.9zM954.7 267.0h1.7v1.7h-1.7zM944.9 267.5h0.9v0.9h-0.9zM937.0 283.8h1.2v1.2h-1.2zM951.4 277.1h1.6v1.6h-1.6zM949.4 277.6h1.6v1.6h-1.6zM936.6 283.8h0.9v0.9h-0.9zM951.7 274.0h1.6v1.6h-1.6zM939.1 275.2h1.5v1.5h-1.5zM931.0 273.1h1.4v1.4h-1.4zM951.8 262.0h1.4v1.4h-1.4zM946.3 278.1h1.0v1.0h-1.0zM940.1 259.4h1.4v1.4h-1.4zM938.8 272.0h1.5v1.5h-1.5zM953.2 274.4h1.3v1.3h-1.3zM947.9 274.1h1.5v1.5h-1.5zM939.8 264.4h1.0v1.0h-1.0zM938.1 273.9h1.0v1.0h-1.0zM943.0 269.4h1.6v1.6h-1.6zM942.3 260.5h1.1v1.1h-1.1zM934.2 282.9h1.2v1.2h-1.2zM943.3 281.7h1.6v1.6h-1.6zM932.8 268.0h1.5v1.5h-1.5zM935.9 282.8h1.1v1.1h-1.1zM933.2 276.4h1.3v1.3h-1.3zM935.9 278.3h1.4v1.4h-1.4zM956.0 272.2h1.6v1.6h-1.6zM946.1 273.5h1.1v1.1h-1.1zM953.4 269.6h1.0v1.0h-1.0zM946.1 273.5h0.9v0.9h-0.9zM951.4 285.9h0.8v0.8h-0.8zM940.6 284.0h1.4v1.4h-1.4zM956.0 274.1h1.0v1.0h-1.0zM944.5 278.3h1.2v1.2h-1.2zM932.0 280.8h1.6v1.6h-1.6zM955.8 273.8h1.1v1.1h-1.1zM940.6 276.7h1.5v1.5h-1.5zM941.0 287.2h0.8v0.8h-0.8zM954.4 264.4h1.3v1.3h-1.3zM947.6 279.9h0.8v0.8h-0.8zM939.2 286.5h1.1v1.1h-1.1zM957.2 269.8h1.2v1.2h-1.2zM935.4 280.4h1.4v1.4h-1.4zM951.5 285.8h1.3v1.3h-1.3zM935.7 269.1h1.4v1.4h-1.4zM941.1 284.3h1.3v1.3h-1.3zM947.1 280.8h1.4v1.4h-1.4zM950.9 277.5h1.3v1.3h-1.3zM945.9 275.1h1.6v1.6h-1.6zM935.5 262.3h0.8v0.8h-0.8zM943.7 264.4h1.4v1.4h-1.4zM951.6 264.2h0.9v0.9h-0.9zM936.1 270.0h1.3v1.3h-1.3zM934.6 280.6h1.0v1.0h-1.0zM937.6 269.3h0.9v0.9h-0.9zM952.9 272.0h1.2v1.2h-1.2zM934.3 266.7h1.1v1.1h-1.1zM957.2 268.1h0.9v0.9h-0.9zM947.3 268.9h1.4v1.4h-1.4zM939.6 275.2h0.9v0.9h-0.9zM940.1 264.6h1.1v1.1h-1.1zM950.1 280.0h0.8v0.8h-0.8zM953.7 263.9h1.3v1.3h-1.3zM949.3 285.9h1.6v1.6h-1.6zM941.3 281.5h1.2v1.2h-1.2zM940.6 283.0h0.8v0.8h-0.8zM946.2 260.3h0.9v0.9h-0.9zM942.0 269.8h1.2v1.2h-1.2zM945.5 280.8h0.8v0.8h-0.8zM937.5 271.8h1.3v1.3h-1.3zM954.0 279.0h1.6v1.6h-1.6zM944.5 280.6h1.0v1.0h-1.0zM940.9 278.6h0.8v0.8h-0.8zM940.4 269.2h1.4v1.4h-1.4zM936.8 269.7h1.6v1.6h-1.6zM933.8 283.0h1.5v1.5h-1.5zM929.9 273.0h1.1v1.1h-1.1zM956.0 278.8h1.5v1.5h-1.5zM956.9 280.2h1.3v1.3h-1.3zM933.8 274.6h1.7v1.7h-1.7zM958.3 275.6h1.0v1.0h-1.0zM935.2 268.4h1.3v1.3h-1.3zM949.6 268.6h1.1v1.1h-1.1zM932.0 267.7h1.1v1.1h-1.1zM954.3 276.4h1.2v1.2h-1.2zM951.8 262.8h0.8v0.8h-0.8zM950.8 264.2h1.4v1.4h-1.4zM953.1 278.4h1.3v1.3h-1.3zM943.2 276.9h1.1v1.1h-1.1zM955.6 265.8h1.4v1.4h-1.4zM931.5 270.1h1.0v1.0h-1.0zM934.9 276.7h1.2v1.2h-1.2zM956.4 270.4h1.4v1.4h-1.4zM944.3 287.6h1.1v1.1h-1.1zM953.8 276.6h1.4v1.4h-1.4zM938.3 281.2h1.3v1.3h-1.3zM943.6 262.1h1.5v1.5h-1.5zM933.2 269.4h1.5v1.5h-1.5zM933.3 263.6h1.7v1.7h-1.7zM939.2 268.8h1.1v1.1h-1.1zM931.3 276.0h1.7v1.7h-1.7zM941.5 285.1h1.6v1.6h-1.6zM940.6 287.5h0.9v0.9h-0.9zM933.4 266.7h1.3v1.3h-1.3zM945.3 274.0h1.4v1.4h-1.4zM934.8 273.6h1.1v1.1h-1.1zM953.2 262.1h0.9v0.9h-0.9zM937.7 279.3h1.2v1.2h-1.2zM937.7 283.7h1.3v1.3h-1.3zM934.7 271.4h1.2v1.2h-1.2zM955.8 266.3h1.3v1.3h-1.3zM940.8 277.0h1.3v1.3h-1.3zM946.8 281.6h1.4v1.4h-1.4zM955.7 280.6h1.5v1.5h-1.5zM951.6 274.7h1.4v1.4h-1.4zM930.4 270.2h1.7v1.7h-1.7zM935.5 279.4h1.7v1.7h-1.7zM939.1 279.9h0.8v0.8h-0.8zM931.7 274.0h1.0v1.0h-1.0zM947.9 274.8h1.6v1.6h-1.6zM955.0 280.3h1.3v1.3h-1.3zM951.5 270.9h0.9v0.9h-0.9zM956.6 277.3h1.0v1.0h-1.0zM951.6 281.9h1.3v1.3h-1.3zM952.6 271.4h1.1v1.1h-1.1zM947.2 278.8h1.1v1.1h-1.1zM944.8 287.6h1.3v1.3h-1.3zM957.7 276.5h1.5v1.5h-1.5zM945.6 280.5h1.5v1.5h-1.5zM938.2 260.2h1.3v1.3h-1.3zM934.8 268.6h1.3v1.3h-1.3zM932.6 271.2h1.4v1.4h-1.4zM942.1 275.0h1.6v1.6h-1.6zM946.0 269.3h1.6v1.6h-1.6zM933.3 278.9h1.3v1.3h-1.3zM934.3 273.4h1.6v1.6h-1.6zM938.6 275.6h1.3v1.3h-1.3zM930.4 271.8h1.5v1.5h-1.5zM944.0 283.8h0.8v0.8h-0.8zM938.6 260.3h1.0v1.0h-1.0zM931.9 280.5h1.1v1.1h-1.1zM938.0 284.5h1.1v1.1h-1.1zM951.8 275.5h1.4v1.4h-1.4z" fill="#000" opacity="0.75"/></g><circle cx="979" cy="274" r="13.6" fill="#444" opacity="0.55"/><g filter="url(#bl03)"><path d="M969.0 282.8h1.0v1.0h-1.0zM968.9 278.2h1.4v1.4h-1.4zM983.0 273.0h1.2v1.2h-1.2zM970.6 273.1h1.6v1.6h-1.6zM989.8 265.8h0.8v0.8h-0.8zM975.4 262.0h0.9v0.9h-0.9zM985.1 271.1h0.8v0.8h-0.8zM971.6 273.8h1.0v1.0h-1.0zM975.4 275.2h0.8v0.8h-0.8zM969.3 274.1h1.3v1.3h-1.3zM986.8 272.0h0.9v0.9h-0.9zM964.9 275.8h1.0v1.0h-1.0zM971.6 276.1h1.2v1.2h-1.2zM975.0 272.3h1.6v1.6h-1.6zM985.1 285.4h1.3v1.3h-1.3zM975.9 273.0h1.1v1.1h-1.1zM967.0 269.6h1.7v1.7h-1.7zM989.6 271.8h1.4v1.4h-1.4zM968.3 267.0h1.6v1.6h-1.6zM969.1 268.5h1.3v1.3h-1.3zM976.8 279.7h1.2v1.2h-1.2zM978.6 263.9h1.2v1.2h-1.2zM965.8 274.7h1.4v1.4h-1.4zM975.3 260.7h1.3v1.3h-1.3zM975.7 271.0h1.0v1.0h-1.0zM988.0 264.5h1.0v1.0h-1.0zM987.4 273.0h1.1v1.1h-1.1zM978.0 281.6h1.5v1.5h-1.5zM975.2 271.7h1.2v1.2h-1.2zM985.0 270.1h1.1v1.1h-1.1zM968.5 272.6h1.6v1.6h-1.6zM983.4 279.1h1.0v1.0h-1.0zM974.7 262.4h1.6v1.6h-1.6zM973.7 269.8h1.0v1.0h-1.0zM985.5 264.8h0.9v0.9h-0.9zM983.5 264.6h1.7v1.7h-1.7zM974.0 281.2h1.4v1.4h-1.4zM988.3 270.8h1.1v1.1h-1.1zM981.2 279.2h0.9v0.9h-0.9zM965.8 274.0h1.7v1.7h-1.7zM991.4 277.7h0.8v0.8h-0.8zM975.7 267.7h0.8v0.8h-0.8zM979.1 282.5h1.0v1.0h-1.0zM983.0 276.3h0.8v0.8h-0.8zM975.6 279.6h1.4v1.4h-1.4zM978.7 262.3h0.8v0.8h-0.8zM980.4 273.5h1.2v1.2h-1.2zM976.5 260.7h1.3v1.3h-1.3zM984.7 266.1h0.9v0.9h-0.9zM984.1 269.5h1.4v1.4h-1.4zM981.7 261.9h1.6v1.6h-1.6zM978.6 271.7h1.5v1.5h-1.5zM986.0 276.7h1.6v1.6h-1.6zM973.4 266.9h1.3v1.3h-1.3zM971.9 274.8h1.0v1.0h-1.0zM970.8 264.0h1.7v1.7h-1.7zM977.6 281.1h1.1v1.1h-1.1zM985.4 261.7h1.2v1.2h-1.2zM970.3 264.2h1.1v1.1h-1.1zM979.2 264.4h1.7v1.7h-1.7zM968.1 269.0h1.6v1.6h-1.6zM969.1 267.4h1.6v1.6h-1.6zM987.3 268.8h1.6v1.6h-1.6zM988.2 270.8h1.0v1.0h-1.0zM971.2 275.4h1.2v1.2h-1.2zM978.8 270.4h1.6v1.6h-1.6zM973.8 271.6h1.6v1.6h-1.6zM968.2 266.5h1.0v1.0h-1.0zM978.2 262.0h1.0v1.0h-1.0zM966.0 273.8h1.7v1.7h-1.7zM976.1 268.4h1.6v1.6h-1.6zM966.4 273.9h1.6v1.6h-1.6zM988.1 268.6h1.6v1.6h-1.6zM978.5 276.6h1.6v1.6h-1.6zM975.6 272.6h1.0v1.0h-1.0zM968.8 265.0h1.2v1.2h-1.2zM990.8 270.5h1.6v1.6h-1.6zM984.2 266.0h0.8v0.8h-0.8zM972.7 270.8h1.4v1.4h-1.4zM981.6 286.9h0.9v0.9h-0.9zM971.2 273.2h1.5v1.5h-1.5zM974.2 261.9h1.0v1.0h-1.0zM980.9 261.5h1.0v1.0h-1.0zM978.8 271.7h1.4v1.4h-1.4zM974.3 285.9h1.5v1.5h-1.5zM972.4 273.0h1.2v1.2h-1.2zM987.6 275.0h1.0v1.0h-1.0zM967.4 275.0h1.0v1.0h-1.0zM987.3 269.5h1.2v1.2h-1.2zM968.9 266.6h1.5v1.5h-1.5zM988.0 270.8h1.4v1.4h-1.4zM984.5 263.6h1.2v1.2h-1.2zM972.0 279.5h1.5v1.5h-1.5zM983.5 260.8h0.8v0.8h-0.8zM984.4 268.8h1.5v1.5h-1.5zM981.1 274.4h1.2v1.2h-1.2zM978.9 269.4h1.3v1.3h-1.3zM967.8 267.4h1.1v1.1h-1.1zM985.3 263.0h0.9v0.9h-0.9zM984.2 276.0h1.0v1.0h-1.0zM978.6 264.1h1.0v1.0h-1.0zM965.9 271.6h1.5v1.5h-1.5zM969.1 267.3h1.5v1.5h-1.5zM973.3 280.0h1.2v1.2h-1.2zM981.1 269.6h1.1v1.1h-1.1zM979.0 276.6h1.6v1.6h-1.6zM982.4 265.0h1.0v1.0h-1.0zM985.1 264.3h1.0v1.0h-1.0zM973.5 268.0h1.2v1.2h-1.2zM965.2 274.2h1.5v1.5h-1.5zM977.0 263.0h1.6v1.6h-1.6z" fill="#000" opacity="1.0"/><path d="M976.6 271.3h1.0v1.0h-1.0zM970.8 269.1h0.9v0.9h-0.9zM969.2 278.1h1.2v1.2h-1.2zM968.0 280.2h1.2v1.2h-1.2zM968.6 268.7h1.2v1.2h-1.2zM969.1 273.7h1.2v1.2h-1.2zM978.1 266.2h1.5v1.5h-1.5zM967.1 280.9h0.9v0.9h-0.9zM985.0 269.1h1.5v1.5h-1.5zM976.1 262.2h1.2v1.2h-1.2zM980.8 266.3h1.6v1.6h-1.6zM975.7 285.0h1.1v1.1h-1.1zM986.3 265.4h1.6v1.6h-1.6zM969.6 279.9h1.6v1.6h-1.6zM986.0 272.7h1.3v1.3h-1.3zM979.6 268.5h1.2v1.2h-1.2zM975.9 274.6h1.4v1.4h-1.4zM973.4 280.8h1.6v1.6h-1.6zM980.0 268.5h0.8v0.8h-0.8zM986.2 279.3h0.9v0.9h-0.9zM968.9 263.6h1.7v1.7h-1.7zM965.7 273.2h1.1v1.1h-1.1zM976.8 284.9h0.9v0.9h-0.9zM980.1 261.9h1.1v1.1h-1.1zM968.2 270.1h1.6v1.6h-1.6zM964.9 275.9h1.1v1.1h-1.1zM970.3 266.1h1.7v1.7h-1.7zM966.2 279.0h1.4v1.4h-1.4zM982.3 275.4h1.5v1.5h-1.5zM972.0 266.5h0.8v0.8h-0.8zM985.5 275.9h1.7v1.7h-1.7zM981.0 260.4h1.0v1.0h-1.0zM973.2 283.2h1.0v1.0h-1.0zM966.6 272.3h1.3v1.3h-1.3zM979.4 265.2h1.3v1.3h-1.3zM968.7 270.9h1.0v1.0h-1.0zM973.4 276.9h1.6v1.6h-1.6zM968.1 266.0h1.4v1.4h-1.4zM986.0 271.6h1.0v1.0h-1.0zM978.8 285.7h1.2v1.2h-1.2zM976.7 271.7h1.5v1.5h-1.5zM971.0 284.8h1.5v1.5h-1.5zM973.1 280.3h1.1v1.1h-1.1zM982.2 277.6h1.1v1.1h-1.1zM964.9 271.1h1.5v1.5h-1.5zM965.2 269.7h1.7v1.7h-1.7zM971.3 284.2h0.9v0.9h-0.9zM976.5 274.6h1.4v1.4h-1.4zM976.2 274.4h1.0v1.0h-1.0zM981.3 268.3h1.1v1.1h-1.1zM985.1 264.0h1.6v1.6h-1.6zM986.1 262.3h1.1v1.1h-1.1zM983.9 267.5h1.0v1.0h-1.0zM987.0 271.5h1.4v1.4h-1.4zM974.8 271.7h1.5v1.5h-1.5zM969.2 273.2h1.0v1.0h-1.0zM975.4 277.8h1.5v1.5h-1.5zM973.4 283.5h1.1v1.1h-1.1zM974.5 270.4h1.4v1.4h-1.4zM985.1 278.4h1.3v1.3h-1.3zM978.6 272.4h0.9v0.9h-0.9zM981.3 270.3h0.9v0.9h-0.9zM988.1 280.9h0.9v0.9h-0.9zM969.9 282.5h1.2v1.2h-1.2zM975.2 285.3h1.1v1.1h-1.1zM985.8 264.0h1.5v1.5h-1.5zM973.1 272.5h1.2v1.2h-1.2zM977.1 273.7h1.6v1.6h-1.6zM972.6 262.8h1.3v1.3h-1.3zM989.1 280.6h1.0v1.0h-1.0zM980.6 280.6h0.9v0.9h-0.9zM989.8 277.3h1.4v1.4h-1.4zM976.4 268.4h1.2v1.2h-1.2zM966.1 271.4h1.7v1.7h-1.7zM983.3 261.6h1.1v1.1h-1.1zM977.1 262.7h1.7v1.7h-1.7zM978.5 285.5h1.4v1.4h-1.4zM983.3 270.6h0.9v0.9h-0.9zM977.8 268.7h1.1v1.1h-1.1zM979.1 270.8h1.0v1.0h-1.0zM980.8 277.3h0.9v0.9h-0.9zM980.3 266.4h0.8v0.8h-0.8zM978.6 263.8h0.9v0.9h-0.9zM972.6 275.8h1.4v1.4h-1.4zM989.6 273.1h0.8v0.8h-0.8zM984.4 267.7h0.8v0.8h-0.8zM982.6 279.6h1.5v1.5h-1.5zM986.4 271.2h1.0v1.0h-1.0zM990.9 273.1h1.6v1.6h-1.6zM983.6 268.7h1.6v1.6h-1.6zM976.5 262.8h1.4v1.4h-1.4zM977.6 281.1h1.0v1.0h-1.0zM973.1 278.2h1.3v1.3h-1.3zM974.8 284.0h1.2v1.2h-1.2zM978.8 279.8h1.6v1.6h-1.6zM982.5 281.2h1.1v1.1h-1.1zM981.6 275.1h0.9v0.9h-0.9zM983.1 272.2h1.0v1.0h-1.0zM974.0 275.3h1.6v1.6h-1.6zM980.7 281.8h1.1v1.1h-1.1zM977.7 275.5h1.7v1.7h-1.7zM974.0 276.1h0.9v0.9h-0.9zM976.3 278.6h0.9v0.9h-0.9zM983.6 264.5h1.6v1.6h-1.6zM975.4 267.7h1.0v1.0h-1.0zM976.1 285.2h1.0v1.0h-1.0zM985.8 265.5h1.7v1.7h-1.7zM964.8 273.6h1.4v1.4h-1.4zM980.5 274.4h1.2v1.2h-1.2zM976.7 283.5h1.2v1.2h-1.2zM987.9 269.7h1.6v1.6h-1.6zM977.3 261.2h1.6v1.6h-1.6zM966.9 280.7h1.5v1.5h-1.5zM965.7 276.3h1.5v1.5h-1.5zM985.4 270.7h1.1v1.1h-1.1zM980.3 274.1h0.8v0.8h-0.8zM970.6 268.7h1.2v1.2h-1.2zM971.2 277.5h1.2v1.2h-1.2zM987.4 263.2h1.4v1.4h-1.4zM971.4 278.6h1.5v1.5h-1.5zM977.3 270.7h1.6v1.6h-1.6zM968.8 276.3h0.8v0.8h-0.8zM971.0 276.2h1.6v1.6h-1.6zM990.4 279.3h1.5v1.5h-1.5zM978.5 261.1h1.0v1.0h-1.0zM967.8 278.7h0.8v0.8h-0.8zM967.7 277.0h1.5v1.5h-1.5zM972.4 270.8h1.3v1.3h-1.3zM983.0 264.1h1.7v1.7h-1.7zM967.5 279.8h1.0v1.0h-1.0zM968.3 266.3h1.4v1.4h-1.4zM986.9 262.7h1.6v1.6h-1.6zM988.1 271.6h1.0v1.0h-1.0zM971.4 281.2h1.7v1.7h-1.7zM970.7 268.8h0.8v0.8h-0.8zM979.1 266.4h1.0v1.0h-1.0zM981.8 261.1h0.9v0.9h-0.9zM973.2 282.2h1.6v1.6h-1.6zM968.9 267.2h1.3v1.3h-1.3zM972.2 269.0h1.6v1.6h-1.6zM982.6 270.7h1.5v1.5h-1.5zM968.7 265.8h1.4v1.4h-1.4zM973.9 269.8h1.3v1.3h-1.3zM981.4 268.1h0.8v0.8h-0.8zM965.4 276.9h0.9v0.9h-0.9zM987.3 268.9h1.2v1.2h-1.2zM975.9 271.0h1.4v1.4h-1.4zM977.2 274.0h1.5v1.5h-1.5zM978.9 261.7h0.9v0.9h-0.9zM973.0 269.8h1.3v1.3h-1.3zM984.0 261.8h1.4v1.4h-1.4zM983.2 261.0h1.2v1.2h-1.2zM974.7 266.5h1.3v1.3h-1.3zM980.5 268.4h1.0v1.0h-1.0zM991.7 275.2h1.1v1.1h-1.1zM974.7 271.1h1.2v1.2h-1.2zM986.8 265.8h1.2v1.2h-1.2zM984.1 285.7h1.4v1.4h-1.4zM976.5 269.1h1.0v1.0h-1.0zM989.3 278.2h1.5v1.5h-1.5zM979.7 268.3h1.2v1.2h-1.2zM971.5 275.5h1.6v1.6h-1.6zM982.8 286.5h1.0v1.0h-1.0zM969.1 266.0h1.1v1.1h-1.1zM975.6 271.5h1.0v1.0h-1.0zM976.2 277.7h1.4v1.4h-1.4zM977.5 279.0h1.6v1.6h-1.6zM978.8 272.0h1.6v1.6h-1.6zM971.2 283.9h1.5v1.5h-1.5zM975.2 263.2h0.9v0.9h-0.9zM989.5 273.8h1.4v1.4h-1.4zM975.0 266.9h0.9v0.9h-0.9zM975.7 277.0h1.4v1.4h-1.4zM981.4 264.8h1.3v1.3h-1.3zM990.6 274.2h1.1v1.1h-1.1zM976.4 264.8h0.9v0.9h-0.9zM967.1 269.5h1.0v1.0h-1.0zM971.9 263.7h1.0v1.0h-1.0zM972.1 282.4h1.6v1.6h-1.6zM968.3 275.6h1.2v1.2h-1.2zM966.4 272.9h0.9v0.9h-0.9zM983.5 270.7h0.9v0.9h-0.9zM981.8 261.0h1.0v1.0h-1.0zM978.9 265.7h1.1v1.1h-1.1zM980.7 270.0h1.5v1.5h-1.5zM969.7 283.1h0.9v0.9h-0.9zM969.8 269.7h1.4v1.4h-1.4zM987.4 275.9h1.1v1.1h-1.1zM974.3 282.7h1.6v1.6h-1.6zM971.1 272.1h1.6v1.6h-1.6zM965.3 275.7h1.2v1.2h-1.2zM971.7 263.7h1.0v1.0h-1.0zM985.1 265.2h1.0v1.0h-1.0zM976.7 277.4h1.7v1.7h-1.7zM976.8 283.4h1.0v1.0h-1.0zM970.6 281.5h1.0v1.0h-1.0zM971.6 271.9h1.1v1.1h-1.1zM978.5 271.6h1.0v1.0h-1.0zM976.3 269.6h1.2v1.2h-1.2zM977.4 265.4h1.1v1.1h-1.1zM973.7 273.3h1.1v1.1h-1.1zM977.6 263.8h0.9v0.9h-0.9zM987.9 282.4h1.6v1.6h-1.6zM979.5 261.9h1.1v1.1h-1.1zM969.1 278.6h1.5v1.5h-1.5zM977.2 264.8h1.0v1.0h-1.0zM971.1 280.5h0.8v0.8h-0.8zM975.3 268.7h0.9v0.9h-0.9zM983.2 274.1h0.8v0.8h-0.8zM979.1 262.2h0.9v0.9h-0.9z" fill="#000" opacity="0.75"/><path d="M966.0 272.3h1.5v1.5h-1.5zM975.2 273.8h1.1v1.1h-1.1zM973.3 261.6h1.0v1.0h-1.0zM975.8 263.5h1.0v1.0h-1.0zM983.1 267.9h1.4v1.4h-1.4zM977.7 277.5h1.4v1.4h-1.4zM966.4 269.4h1.0v1.0h-1.0zM982.5 276.2h1.3v1.3h-1.3zM982.7 272.8h1.5v1.5h-1.5zM982.0 275.2h1.2v1.2h-1.2zM968.3 277.0h1.0v1.0h-1.0zM981.9 273.2h1.2v1.2h-1.2zM991.0 275.2h1.6v1.6h-1.6zM968.5 270.7h1.1v1.1h-1.1zM989.9 269.1h1.6v1.6h-1.6zM984.1 263.4h0.9v0.9h-0.9zM976.0 284.3h1.0v1.0h-1.0zM966.6 277.1h1.7v1.7h-1.7zM982.9 266.4h1.3v1.3h-1.3zM975.7 280.5h0.8v0.8h-0.8zM974.1 285.3h1.5v1.5h-1.5zM985.3 264.2h1.2v1.2h-1.2zM965.3 271.5h1.6v1.6h-1.6zM973.4 283.0h1.5v1.5h-1.5zM990.0 277.9h1.1v1.1h-1.1zM973.9 274.5h1.0v1.0h-1.0zM982.2 272.1h1.2v1.2h-1.2zM979.6 267.2h0.8v0.8h-0.8zM973.1 274.0h1.3v1.3h-1.3zM972.7 261.3h0.9v0.9h-0.9zM967.4 267.3h1.5v1.5h-1.5zM985.3 263.9h1.0v1.0h-1.0zM973.8 275.1h1.2v1.2h-1.2zM983.5 269.2h1.3v1.3h-1.3zM979.2 265.8h0.8v0.8h-0.8zM976.2 277.4h1.1v1.1h-1.1zM974.8 275.4h1.5v1.5h-1.5zM976.0 274.5h1.5v1.5h-1.5zM989.3 267.6h1.0v1.0h-1.0zM970.1 263.7h1.6v1.6h-1.6zM969.2 270.4h1.6v1.6h-1.6zM978.5 267.7h1.2v1.2h-1.2zM972.1 270.3h1.1v1.1h-1.1zM975.5 262.0h1.6v1.6h-1.6zM976.9 268.9h1.6v1.6h-1.6zM987.9 267.0h1.3v1.3h-1.3zM971.7 273.8h1.2v1.2h-1.2zM978.7 263.3h1.5v1.5h-1.5zM977.8 276.4h1.6v1.6h-1.6zM971.8 280.1h1.2v1.2h-1.2zM979.6 265.1h1.3v1.3h-1.3zM966.3 267.6h1.4v1.4h-1.4zM968.5 280.4h1.3v1.3h-1.3zM985.2 275.7h1.5v1.5h-1.5zM972.5 262.5h1.6v1.6h-1.6zM978.6 286.4h1.4v1.4h-1.4zM974.1 281.8h1.7v1.7h-1.7zM983.4 275.5h1.6v1.6h-1.6zM972.7 274.6h1.6v1.6h-1.6zM991.7 276.3h1.1v1.1h-1.1zM977.5 268.5h1.4v1.4h-1.4zM973.8 277.8h1.5v1.5h-1.5zM978.6 287.0h1.0v1.0h-1.0zM969.8 274.8h1.3v1.3h-1.3zM973.4 264.6h0.9v0.9h-0.9zM982.6 261.5h0.9v0.9h-0.9zM981.6 260.5h0.9v0.9h-0.9zM988.6 269.2h1.3v1.3h-1.3zM979.4 284.1h0.8v0.8h-0.8zM969.8 276.3h1.3v1.3h-1.3zM984.9 270.4h1.6v1.6h-1.6zM979.2 265.2h1.5v1.5h-1.5zM988.6 274.0h0.9v0.9h-0.9zM987.2 276.2h1.2v1.2h-1.2zM968.4 281.3h1.0v1.0h-1.0zM992.1 272.1h1.1v1.1h-1.1zM970.8 276.4h1.4v1.4h-1.4zM979.1 260.7h1.3v1.3h-1.3zM982.3 268.3h1.3v1.3h-1.3zM970.0 263.0h1.6v1.6h-1.6zM965.4 270.7h0.9v0.9h-0.9zM972.0 284.7h1.2v1.2h-1.2zM971.8 282.6h1.4v1.4h-1.4zM986.7 263.9h0.8v0.8h-0.8zM970.7 272.6h1.2v1.2h-1.2zM979.3 264.2h1.4v1.4h-1.4zM965.3 277.3h1.6v1.6h-1.6zM970.9 262.2h1.2v1.2h-1.2zM969.2 266.8h1.5v1.5h-1.5zM989.9 267.2h1.3v1.3h-1.3zM971.1 281.3h1.1v1.1h-1.1z" fill="#000" opacity="0.5"/></g><path d="M853.8 286.9h5.4v1.2h-5.4zM855.9 284.8h1.2v5.4h-1.2z" fill="#000"/><path d="M887.8 286.9h5.4v1.2h-5.4zM889.9 284.8h1.2v5.4h-1.2z" fill="#000"/><rect x="923.6" y="286.4" width="3.8" height="3.8" fill="#f57f7f"/><path d="M921.8 286.9h5.4v1.2h-5.4zM923.9 284.8h1.2v5.4h-1.2z" fill="#000"/><rect x="957.6" y="286.4" width="3.8" height="3.8" fill="#f57f7f"/><path d="M955.8 286.9h5.4v1.2h-5.4zM957.9 284.8h1.2v5.4h-1.2z" fill="#000"/><rect x="991.6" y="286.4" width="3.8" height="3.8" fill="#f57f7f"/><path d="M989.8 286.9h5.4v1.2h-5.4zM991.9 284.8h1.2v5.4h-1.2z" fill="#000"/><ellipse cx="842" cy="306" rx="14" ry="8.6" fill="#111"/><g fill="#fff"><rect x="837.1" y="300.3" width="2.0" height="0.9"/><rect x="842.4" y="303.5" width="1.1" height="1.4"/><rect x="829.9" y="304.5" width="1.1" height="0.9"/><rect x="839.6" y="310.4" width="1.2" height="1.1"/><rect x="844.7" y="312.2" width="1.9" height="1.3"/><rect x="853.4" y="298.7" width="2.4" height="1.1"/><rect x="832.6" y="299.8" width="1.5" height="1.8"/><rect x="833.5" y="306.7" width="2.0" height="1.2"/><rect x="842.7" y="298.9" width="1.1" height="1.0"/><rect x="846.0" y="304.4" width="1.5" height="1.5"/><rect x="840.3" y="302.5" width="2.3" height="1.6"/><rect x="835.1" y="306.6" width="1.8" height="1.9"/><rect x="847.2" y="302.3" width="2.6" height="0.9"/><rect x="839.5" y="309.4" width="1.2" height="1.4"/><rect x="830.0" y="308.0" width="2.2" height="1.5"/><rect x="850.9" y="302.7" width="2.1" height="1.5"/><rect x="843.5" y="304.8" width="2.3" height="1.9"/><rect x="840.9" y="308.0" width="1.1" height="1.6"/><rect x="845.2" y="312.9" width="2.3" height="1.1"/><rect x="838.6" y="308.0" width="1.0" height="1.4"/><rect x="833.2" y="299.8" width="1.1" height="1.7"/><rect x="832.2" y="301.7" width="1.6" height="1.8"/><rect x="831.0" y="304.7" width="1.9" height="1.9"/><rect x="849.5" y="311.0" width="1.4" height="1.3"/><rect x="838.0" y="311.3" width="2.5" height="1.0"/><rect x="833.4" y="301.5" width="1.4" height="1.4"/><rect x="843.7" y="301.9" width="1.0" height="1.3"/><rect x="838.2" y="306.5" width="2.5" height="1.6"/><rect x="841.9" y="307.3" width="2.1" height="0.9"/><rect x="851.5" y="309.7" width="2.4" height="1.8"/><rect x="838.8" y="304.0" width="1.2" height="1.6"/><rect x="830.6" y="299.0" width="1.3" height="1.0"/><rect x="837.5" y="298.8" width="1.0" height="1.0"/><rect x="831.5" y="303.5" width="1.0" height="1.8"/><rect x="844.4" y="300.2" width="1.4" height="1.2"/><rect x="838.1" y="299.8" width="2.4" height="2.0"/><rect x="840.6" y="305.3" width="1.1" height="0.9"/><rect x="837.6" y="302.0" width="2.3" height="1.0"/><rect x="829.6" y="312.3" width="1.8" height="1.0"/><rect x="842.6" y="298.4" width="1.8" height="2.0"/><rect x="850.6" y="308.4" width="1.4" height="1.2"/><rect x="833.2" y="309.6" width="1.9" height="1.7"/><rect x="837.2" y="301.3" width="2.3" height="2.0"/><rect x="850.3" y="310.1" width="2.3" height="1.7"/><rect x="834.7" y="305.8" width="1.6" height="0.8"/><rect x="829.7" y="302.2" width="1.4" height="1.6"/><rect x="852.9" y="304.7" width="2.5" height="2.0"/><rect x="852.9" y="303.5" width="1.4" height="1.1"/><rect x="833.9" y="301.1" width="2.0" height="1.9"/><rect x="850.0" y="305.2" width="2.0" height="1.8"/><rect x="831.1" y="307.9" width="2.5" height="1.7"/><rect x="847.8" y="305.2" width="1.3" height="1.7"/><rect x="837.3" y="310.0" width="2.6" height="1.3"/><rect x="839.0" y="312.2" width="2.2" height="1.0"/><rect x="832.2" y="300.3" width="2.4" height="1.8"/><rect x="832.7" y="310.4" width="2.6" height="1.6"/><rect x="837.8" y="306.2" width="1.2" height="0.8"/><rect x="853.3" y="307.7" width="1.8" height="1.9"/><rect x="839.8" y="311.1" width="2.3" height="1.1"/><rect x="835.3" y="302.4" width="1.4" height="1.5"/></g><g stroke="#333" stroke-width="0.9" stroke-dasharray="1.2 0.8"><path d="M863.5 296.6L885.7 295.6"/><path d="M863.3 298.5L887.6 297.5"/><path d="M863.7 300.4L885.8 299.4"/><path d="M864.2 302.3L887.6 301.3"/><path d="M863.8 304.2L887.7 303.2"/><path d="M864.0 306.1L886.1 305.1"/><path d="M864.0 308.0L884.1 307.0"/><path d="M863.9 309.9L884.7 308.9"/><path d="M863.0 311.8L887.2 310.8"/><path d="M863.3 313.7L885.9 312.7"/></g><g filter="url(#bl03)"><path d="M910.3 304.3h0.7v0.7h-0.7zM910.0 306.6h0.6v0.6h-0.6zM908.1 302.3h0.7v0.7h-0.7zM910.0 309.9h0.7v0.7h-0.7zM911.8 286.0h0.5v0.5h-0.5zM911.0 296.5h0.6v0.6h-0.6zM908.0 293.4h1.0v1.0h-1.0zM910.7 318.8h0.8v0.8h-0.8zM910.5 303.8h0.7v0.7h-0.7zM911.1 312.6h0.8v0.8h-0.8zM909.7 298.7h0.9v0.9h-0.9zM909.8 305.9h0.6v0.6h-0.6zM907.4 302.3h0.7v0.7h-0.7zM908.9 304.8h0.6v0.6h-0.6zM909.2 295.5h0.6v0.6h-0.6zM910.5 300.7h0.6v0.6h-0.6zM909.9 308.6h0.7v0.7h-0.7zM908.5 298.3h0.7v0.7h-0.7zM907.9 312.1h0.7v0.7h-0.7z" fill="#000" opacity="0.75"/><path d="M911.0 313.2h0.8v0.8h-0.8zM908.3 297.8h0.8v0.8h-0.8zM907.3 308.2h0.8v0.8h-0.8zM908.1 297.5h0.5v0.5h-0.5zM909.1 311.6h0.5v0.5h-0.5z" fill="#000" opacity="0.25"/><path d="M909.8 304.8h1.0v1.0h-1.0zM909.8 308.7h0.8v0.8h-0.8zM912.2 300.2h0.7v0.7h-0.7zM909.5 299.4h0.8v0.8h-0.8zM910.8 305.6h0.7v0.7h-0.7zM912.1 303.5h0.7v0.7h-0.7zM910.8 308.0h1.0v1.0h-1.0zM912.8 315.6h0.6v0.6h-0.6zM908.5 313.5h0.9v0.9h-0.9zM907.1 304.1h0.6v0.6h-0.6zM909.5 304.9h0.7v0.7h-0.7zM911.4 307.0h0.6v0.6h-0.6zM910.1 298.7h0.6v0.6h-0.6zM909.0 296.0h0.9v0.9h-0.9zM909.5 287.3h0.8v0.8h-0.8zM911.0 315.9h0.6v0.6h-0.6zM910.5 309.3h0.7v0.7h-0.7zM909.4 290.9h0.5v0.5h-0.5zM908.7 309.4h0.9v0.9h-0.9zM908.0 312.9h0.5v0.5h-0.5zM909.4 308.4h0.5v0.5h-0.5zM908.4 300.6h0.9v0.9h-0.9z" fill="#000" opacity="0.5"/></g><g stroke="#777" stroke-width="1.7" stroke-linecap="round" filter="url(#bl05)"><path d="M934 294L936.6 300"/><path d="M941 299L938 305"/><path d="M936 305L932.6 309"/><path d="M943.6 308.6L950 308"/><path d="M945.6 302.6L949 302"/><path d="M954.6 305L956 310.6"/></g><path d="M966 300C963 304 964 308 968 307L971 295M968 296L972 305L976 301L980 305L991 304C994 304 994 309 993 313M976 305L975 313M980 298L980 304M970 308L969 313L974 313" fill="none" stroke="#888" stroke-width="0.8"/></g><path d="M833 370.4L841 370.4M833 375.2L838 375.2M833 380.6L844 380.6" stroke="#d6d6d6" stroke-width="1.7" fill="none"/><path d="M846.6 366.6L849.2 369.2L841.6 376.8L838.4 377.6L839.2 374.4Z" fill="#d6d6d6"/><path d="M870.4 369.4L874.4 369.4L878.8 373.8L878.8 381.4L867.4 381.4L867.4 373.6" fill="none" stroke="#d6d6d6" stroke-width="1.3"/><path d="M874.2 369.6L874.2 374L878.6 374" fill="none" stroke="#d6d6d6" stroke-width="1.2"/><path d="M865 369.6L872 369.6M868.5 366.2L868.5 373.2" stroke="#d6d6d6" stroke-width="1.5"/><rect x="898.6" y="369.2" width="8.4" height="6.4" fill="none" stroke="#d6d6d6" stroke-width="1.3"/><path d="M909.2 372.6L911.6 372.6L911.6 379.2L903 379.2L903 377.6" fill="none" stroke="#d6d6d6" stroke-width="1.3"/><defs><pattern id="ck2" width="2" height="2" patternUnits="userSpaceOnUse"><rect width="2" height="2" fill="#9a9a9a"/><rect width="1" height="1" fill="#f4f4f4"/><rect x="1" y="1" width="1" height="1" fill="#f4f4f4"/></pattern></defs><rect x="928.6" y="366" width="16.4" height="16" rx="2" fill="url(#ck2)"/><path d="M932.4 369.6L941.4 378.4M941.4 369.6L932.4 378.4" stroke="#3d3d3d" stroke-width="2.6"/><path d="M974.6 376.6A5.6 5.6 0 1 1 972.6 369.6" fill="none" stroke="#d6d6d6" stroke-width="2.4"/><path d="M969.6 365.4L976.8 366L975.8 373.2Z" fill="#d6d6d6"/><path d="M998 372L998 367L1005.6 367L1009.6 371L1009.6 374" fill="none" stroke="#d6d6d6" stroke-width="1.3"/><path d="M995 374.4L1010.4 374.4L1010.4 381.6L995 381.6Z" fill="url(#ck2)"/></svg>
<span class="s" style="left:825px;top:106.4px;font-size:10.9px;line-height:14px;font-style:italic;color:#e6e6e6;transform-origin:0 0;transform:scaleX(1.175)">2. Hardness 050 (51 × 51)</span>
<span class="s" style="left:876.4px;top:58.8px;font-size:11.6px;line-height:15px;color:#000;letter-spacing:-0.5px">Aa</span>
<span class="s" style="left:829px;top:321px;font-size:11.4px;line-height:15px;color:#ececec;letter-spacing:0.5px">Basic,</span>
<span class="m" style="left:984.6px;top:345px;font-size:12.6px;line-height:15px;color:#dcdcdc;transform-origin:0 0;transform:scaleX(.76)">10.0</span>
<div style="left:914px;top:390px;width:4.4px;height:1.8px;background:#9a9a9a;"></div>
<div style="left:920.4px;top:390px;width:4.4px;height:1.8px;background:#9a9a9a;"></div>
<div style="left:926.8px;top:390px;width:4.4px;height:1.8px;background:#9a9a9a;"></div>
<div style="left:819.6px;top:414.4px;width:2px;height:3.6px;background:#b8b8b8;"></div>
<div style="left:819.6px;top:421.3px;width:2px;height:3.6px;background:#b8b8b8;"></div>
<div style="left:819.6px;top:428.2px;width:2px;height:3.6px;background:#b8b8b8;"></div>
<div style="left:822px;top:415px;width:203px;height:328px;background:#3d3d3d;border:1px solid #5e5e5e;border-bottom:none;"></div>
<div style="left:846px;top:396px;width:44px;height:20px;background:#2a2a2a;"></div>
<div style="left:867px;top:396px;width:1px;height:20px;background:#3a3a3a;"></div>
<div style="left:822px;top:393px;width:24px;height:23px;background:#454545;border-top:1px solid #5e5e5e;border-right:1px solid #5e5e5e;border-left:1px solid #5e5e5e;"></div>
<div style="left:825px;top:419px;width:148px;height:31px;background:#2d2d2d;border:1px solid #1b1b1b;border-radius:4.5px;"></div>
<div style="left:974px;top:419px;width:48px;height:31px;background:#2d2d2d;border:1px solid #1b1b1b;border-radius:4.5px;"></div>
<div style="left:825px;top:452px;width:197px;height:18.4px;background:#3a3a3a;"></div>
<div style="left:826px;top:452px;width:183px;height:18.4px;background:#565656;"></div>
<div style="left:1009px;top:452px;width:1.4px;height:18.4px;background:#050505;"></div>
<div style="left:825px;top:499px;width:197px;height:244px;background:#303030;"></div>
<div style="left:827px;top:501px;width:24px;height:25px;background:#454545;"></div>
<div style="left:853px;top:501px;width:24px;height:25px;background:#454545;"></div>
<div style="left:879px;top:501px;width:142px;height:25px;background:#454545;"></div>
<svg style="left:822px;top:392px" width="203" height="351" viewBox="822 392 203 351"><path d="M829.6 397.2L842 397.2L838.6 401.0L826.2 401.0Z" fill="#d4d4d4"/><path d="M829.6 403.1L842 403.1L838.6 406.90000000000003L826.2 406.90000000000003Z" fill="#d4d4d4"/><path d="M829.6 409.1L842 409.1L838.6 412.90000000000003L826.2 412.90000000000003Z" fill="#d4d4d4"/><rect x="848.6" y="398.4" width="15.2" height="15" fill="none" stroke="#d4d4d4" stroke-width="1.2"/><path d="M852.4 400.6L852.4 411.2M856.2 400.6L856.2 411.2M860 400.6L860 411.2" stroke="#9c9c9c" stroke-width="1.8"/><path d="M872.8 412.2C873.4 408.2 875.6 405.8 878 405.8C880.4 405.8 882.6 408.2 883.2 412.2" fill="none" stroke="#d4d4d4" stroke-width="2.1"/><path d="M870.6 403.3L885.4 403.3" stroke="#d4d4d4" stroke-width="1.4"/><rect x="869.8" y="401.8" width="3" height="3" fill="#d4d4d4"/><rect x="883.2" y="401.8" width="3" height="3" fill="#d4d4d4"/><rect x="1009.5" y="400.3" width="9.4" height="9.4" fill="#3a3a3a" stroke="#c9c9c9" stroke-width="1"/><path d="M1011.8 405L1017 401.8L1017 408.2Z" fill="#c4c4c4"/><text x="832" y="439.2" font-size="11" fill="#6a6a6a">モード</text><text x="922.6" y="439.2" font-size="11" fill="#6a6a6a">標準</text><path d="M955.2 431.4L960.2 437.0L965.2 431.4" fill="none" stroke="#f0f0f0" stroke-width="1.8"/><path d="M1004.4 431.4L1009.4 437.0L1014.4 431.4" fill="none" stroke="#f0f0f0" stroke-width="1.8"/><path d="M983.6 431.6A5.6 5.6 0 1 1 989 440.2" fill="none" stroke="#d4d4d4" stroke-width="1.5"/><path d="M980.4 431.2L985.8 429L985.4 434.6Z" fill="#d4d4d4"/><rect x="981.6" y="437" width="4.4" height="4.4" rx="2" fill="url(#ck2)"/><text x="827.2" y="466.2" font-size="11" fill="#f0f0f0">不透明度</text><path d="M1011.8 459.4L1015.5999999999999 455.59999999999997L1019.4 459.4" fill="none" stroke="#5e5e5e" stroke-width="1.5"/><path d="M1011.8 463.6L1015.5999999999999 467.40000000000003L1019.4 463.6" fill="none" stroke="#5e5e5e" stroke-width="1.5"/><text x="825.4" y="490.6" font-size="11" fill="#9a9a9a">保護:</text><path d="M874.6 478.6C875.2 479.2 870 486.6 866.6 489.6L865 488.4C867.6 484.8 874 478.2 874.6 478.6Z" fill="#cfcfcf"/><path d="M864.4 489L866 490.4C865.4 492.4 862.8 493.4 860.2 493.2C861.8 492.2 862.4 489.8 864.4 489Z" fill="#cfcfcf"/><g transform="translate(894 485.8) scale(0.84)" fill="#cfcfcf"><path d="M-0.8 -6.2L0.8 -6.2L0.8 -0.8L6.2 -0.8L6.2 0.8L0.8 0.8L0.8 6.2L-0.8 6.2L-0.8 0.8L-6.2 0.8L-6.2 -0.8L-0.8 -0.8Z"/><path d="M0 -9.2L3 -5.6L-3 -5.6ZM0 9.2L3 5.6L-3 5.6ZM-9.2 0L-5.6 -3L-5.6 3ZM9.2 0L5.6 -3L5.6 3Z"/></g><defs><pattern id="ck4" width="8" height="8" patternUnits="userSpaceOnUse"><rect width="8" height="8" fill="url(#ck2)"/><rect width="4" height="4" fill="#3c3c3c" opacity=".6"/><rect x="4" y="4" width="4" height="4" fill="#3c3c3c" opacity=".6"/></pattern></defs><rect x="913" y="478" width="16" height="16" fill="url(#ck4)"/><path d="M831.4 513.6C834 508.6 844 508.6 846.6 513.6C844 518.6 834 518.6 831.4 513.6Z" fill="none" stroke="#d4d4d4" stroke-width="1.3"/><circle cx="839" cy="513.4" r="2.5" fill="#d4d4d4"/><rect x="861.8" y="506.6" width="6" height="6.2" rx="1.2" fill="none" stroke="#d4d4d4" stroke-width="1.9"/><path d="M864.8 512.4L864.8 515.4" stroke="#d4d4d4" stroke-width="1.4"/><path d="M861.8 520.6L861.8 516.4C861.8 515.6 862.4 515 863.2 515L866.4 515C867.2 515 867.8 515.6 867.8 516.4L867.8 520.6" fill="none" stroke="#d4d4d4" stroke-width="1.6"/></svg>
<span class="m" style="left:979px;top:456px;font-size:12.6px;line-height:15px;color:#ececec;transform-origin:0 0;transform:scaleX(.76)">100.0</span></div></body></html>
